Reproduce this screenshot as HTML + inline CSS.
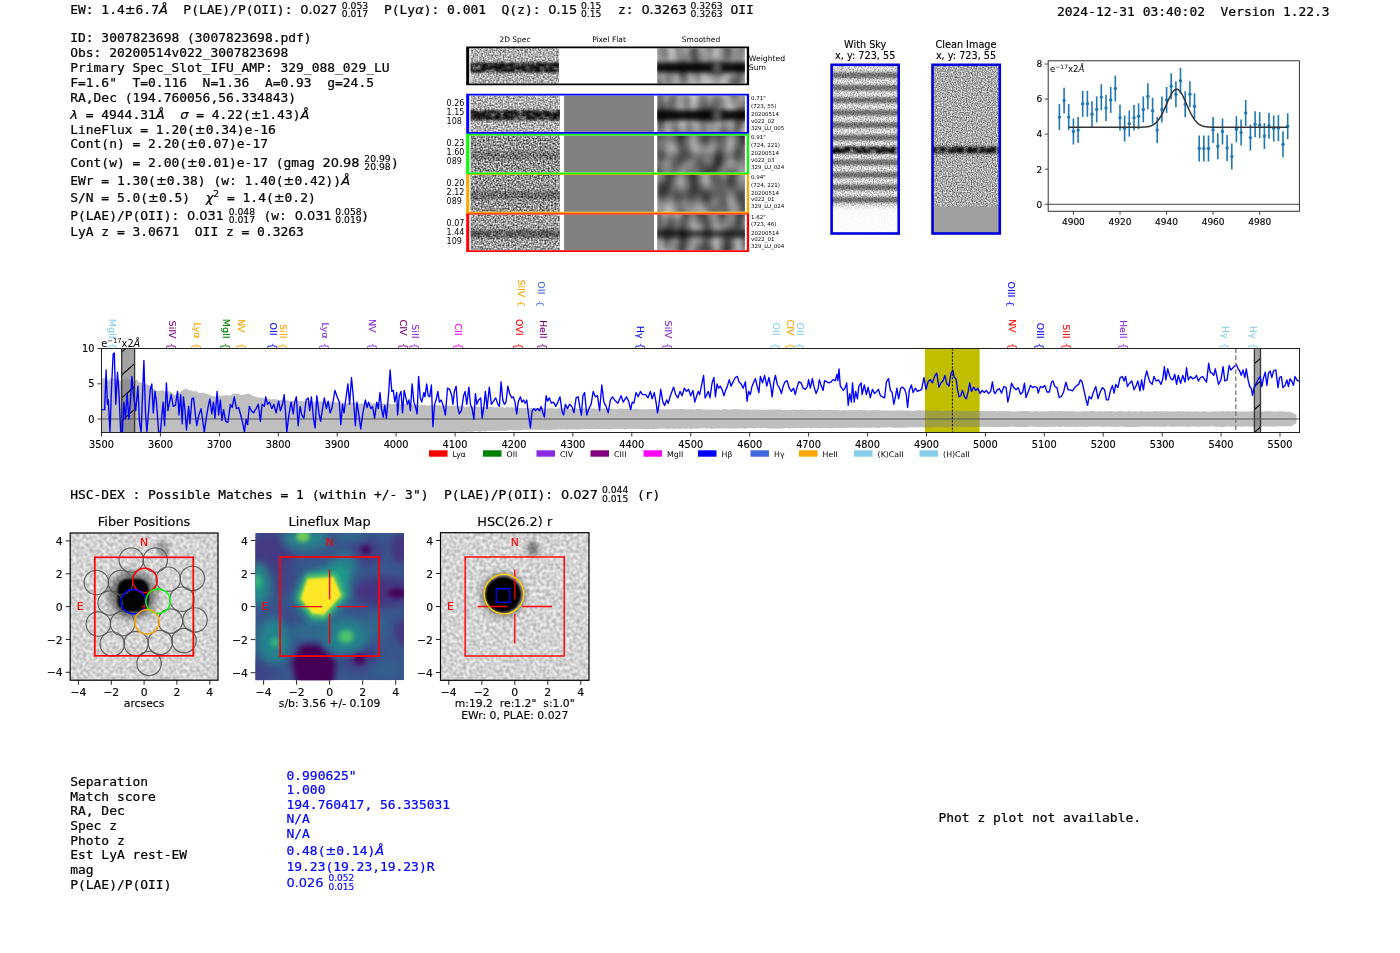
<!DOCTYPE html><html><head><meta charset="utf-8"><title>ELiXer report 3007823698</title><style>
html,body{margin:0;padding:0;background:#fff}body{width:1400px;height:953px;overflow:hidden}
svg{display:block;opacity:0.999}text{white-space:pre}
.m{font-family:'DejaVu Sans Mono','Liberation Mono',monospace}.s{font-family:'DejaVu Sans','Liberation Sans',sans-serif}.i{font-family:'DejaVu Sans','Liberation Sans',sans-serif;font-style:oblique}text.m{stroke-width:0.22px}
text.m{stroke:#000}text.m[fill="#0000ff"]{stroke:#0000ff}
</style></head><body>
<svg width="1400" height="953" viewBox="0 0 1400 953">
<defs>
<filter id="n1" x="0" y="0" width="100%" height="100%" color-interpolation-filters="sRGB"><feTurbulence type="fractalNoise" baseFrequency="0.6" numOctaves="1" seed="3"/><feColorMatrix type="matrix" values="1.25 0 0 0 0.065 1.25 0 0 0 0.065 1.25 0 0 0 0.065 0 0 0 0 1"/></filter>
<filter id="n2" x="0" y="0" width="100%" height="100%" color-interpolation-filters="sRGB"><feTurbulence type="fractalNoise" baseFrequency="0.6" numOctaves="1" seed="11"/><feColorMatrix type="matrix" values="1.25 0 0 0 0.065 1.25 0 0 0 0.065 1.25 0 0 0 0.065 0 0 0 0 1"/></filter>
<filter id="n3" x="0" y="0" width="100%" height="100%" color-interpolation-filters="sRGB"><feTurbulence type="fractalNoise" baseFrequency="0.6" numOctaves="1" seed="23"/><feColorMatrix type="matrix" values="1.5 0 0 0 -0.17 1.5 0 0 0 -0.17 1.5 0 0 0 -0.17 0 0 0 0 1"/></filter>
<filter id="n4" x="0" y="0" width="100%" height="100%" color-interpolation-filters="sRGB"><feTurbulence type="fractalNoise" baseFrequency="0.6" numOctaves="1" seed="31"/><feColorMatrix type="matrix" values="1.5 0 0 0 -0.17 1.5 0 0 0 -0.17 1.5 0 0 0 -0.17 0 0 0 0 1"/></filter>
<filter id="n5" x="0" y="0" width="100%" height="100%" color-interpolation-filters="sRGB"><feTurbulence type="fractalNoise" baseFrequency="0.6" numOctaves="1" seed="47"/><feColorMatrix type="matrix" values="1.4 0 0 0 -0.08 1.4 0 0 0 -0.08 1.4 0 0 0 -0.08 0 0 0 0 1"/></filter>
<filter id="nsm1" x="0" y="0" width="100%" height="100%" color-interpolation-filters="sRGB"><feTurbulence type="fractalNoise" baseFrequency="0.09 0.04" numOctaves="1" seed="9"/><feColorMatrix type="matrix" values="0.9 0 0 0 0.1 0.9 0 0 0 0.1 0.9 0 0 0 0.1 0 0 0 0 1"/></filter>
<filter id="nsm2" x="0" y="0" width="100%" height="100%" color-interpolation-filters="sRGB"><feTurbulence type="fractalNoise" baseFrequency="0.08 0.05" numOctaves="1" seed="19"/><feColorMatrix type="matrix" values="0.9 0 0 0 -0.03 0.9 0 0 0 -0.03 0.9 0 0 0 -0.03 0 0 0 0 1"/></filter>
<filter id="nsm3" x="0" y="0" width="100%" height="100%" color-interpolation-filters="sRGB"><feTurbulence type="fractalNoise" baseFrequency="0.08 0.05" numOctaves="1" seed="29"/><feColorMatrix type="matrix" values="0.9 0 0 0 -0.02 0.9 0 0 0 -0.02 0.9 0 0 0 -0.02 0 0 0 0 1"/></filter>
<filter id="nsm4" x="0" y="0" width="100%" height="100%" color-interpolation-filters="sRGB"><feTurbulence type="fractalNoise" baseFrequency="0.09 0.045" numOctaves="1" seed="39"/><feColorMatrix type="matrix" values="0.85 0 0 0 0.03 0.85 0 0 0 0.03 0.85 0 0 0 0.03 0 0 0 0 1"/></filter>
<filter id="nsky" x="0" y="0" width="100%" height="100%" color-interpolation-filters="sRGB"><feTurbulence type="fractalNoise" baseFrequency="0.75" numOctaves="1" seed="13"/><feColorMatrix type="matrix" values="1.2 0 0 0 0.25 1.2 0 0 0 0.25 1.2 0 0 0 0.25 0 0 0 0 1"/></filter>
<filter id="nclean" x="0" y="0" width="100%" height="100%" color-interpolation-filters="sRGB"><feTurbulence type="fractalNoise" baseFrequency="0.8" numOctaves="1" seed="17"/><feColorMatrix type="matrix" values="1.25 0 0 0 0.045 1.25 0 0 0 0.045 1.25 0 0 0 0.045 0 0 0 0 1"/></filter>
<filter id="nbg" x="0" y="0" width="100%" height="100%" color-interpolation-filters="sRGB"><feTurbulence type="fractalNoise" baseFrequency="0.3" numOctaves="1" seed="21"/><feColorMatrix type="matrix" values="0.45 0 0 0 0.605 0.45 0 0 0 0.605 0.45 0 0 0 0.605 0 0 0 0 1"/></filter>
<filter id="nbg2" x="0" y="0" width="100%" height="100%" color-interpolation-filters="sRGB"><feTurbulence type="fractalNoise" baseFrequency="0.3" numOctaves="1" seed="37"/><feColorMatrix type="matrix" values="0.45 0 0 0 0.605 0.45 0 0 0 0.605 0.45 0 0 0 0.605 0 0 0 0 1"/></filter>
<filter id="blur1" x="-50%" y="-50%" width="200%" height="200%"><feGaussianBlur stdDeviation="1.2"/></filter>
<filter id="blur2" x="-50%" y="-50%" width="200%" height="200%"><feGaussianBlur stdDeviation="2"/></filter>
<filter id="blur3" x="-50%" y="-50%" width="200%" height="200%"><feGaussianBlur stdDeviation="3"/></filter>
<filter id="blur4" x="-50%" y="-50%" width="200%" height="200%"><feGaussianBlur stdDeviation="4"/></filter>
<filter id="blur5" x="-50%" y="-50%" width="200%" height="200%"><feGaussianBlur stdDeviation="5"/></filter>
<filter id="blur7" x="-50%" y="-50%" width="200%" height="200%"><feGaussianBlur stdDeviation="7"/></filter>
<filter id="bandtex" x="-5%" y="-60%" width="110%" height="220%"><feTurbulence type="fractalNoise" baseFrequency="0.22 0.3" numOctaves="1" seed="77"/><feColorMatrix type="matrix" values="0 0 0 0 0 0 0 0 0 0 0 0 0 0 0 2.6 0 0 0 -0.45"/><feComposite in2="SourceGraphic" operator="in"/><feGaussianBlur stdDeviation="1.3"/></filter>
</defs>
<rect width="1400" height="953" fill="#fff"/>
<text class="m" x="70.2" y="14.1" font-size="12.95">EW: 1.4<tspan class="s">±</tspan>6.7<tspan class="i">Å</tspan>  P(LAE)/P(OII): <tspan class="s">0.027</tspan></text>
<text class="s" x="341.80" y="8.90" font-size="9.20" stroke="#000" stroke-width="0.15">0.053</text>
<text class="s" x="341.80" y="17.20" font-size="9.20" stroke="#000" stroke-width="0.15">0.017</text>
<text class="m" x="384" y="14.1" font-size="12.95">P(Ly<tspan class="i">α</tspan>): 0.001  Q(z): <tspan class="s">0.15</tspan></text>
<text class="s" x="581.00" y="8.90" font-size="9.20" stroke="#000" stroke-width="0.15">0.15</text>
<text class="s" x="581.00" y="17.20" font-size="9.20" stroke="#000" stroke-width="0.15">0.15</text>
<text class="m" x="618" y="14.1" font-size="12.95">z: <tspan class="s">0.3263</tspan></text>
<text class="s" x="690.50" y="8.90" font-size="9.20" stroke="#000" stroke-width="0.15">0.3263</text>
<text class="s" x="690.50" y="17.20" font-size="9.20" stroke="#000" stroke-width="0.15">0.3263</text>
<text class="m" x="730.5" y="14.1" font-size="12.95">OII</text>
<text class="m" x="1057.00" y="16.30" font-size="12.95" stroke="#000" stroke-width="0.22" >2024-12-31 03:40:02  Version 1.22.3</text>
<text class="m" x="70.20" y="42.20" font-size="12.95" stroke="#000" stroke-width="0.22" >ID: 3007823698 (3007823698.pdf)</text>
<text class="m" x="70.20" y="57.10" font-size="12.95" stroke="#000" stroke-width="0.22" >Obs: 20200514v022_3007823698</text>
<text class="m" x="70.20" y="71.80" font-size="12.95" stroke="#000" stroke-width="0.22" >Primary Spec_Slot_IFU_AMP: 329_088_029_LU</text>
<text class="m" x="70.20" y="87.20" font-size="12.95" stroke="#000" stroke-width="0.22" >F=1.6"  T=0.116  N=1.36  A=0.93  g=24.5</text>
<text class="m" x="70.20" y="101.50" font-size="12.95" stroke="#000" stroke-width="0.22" >RA,Dec (194.760056,56.334843)</text>
<text class="m" x="70.2" y="119.3" font-size="12.95"><tspan class="i">λ</tspan> = 4944.31<tspan class="i">Å</tspan>  <tspan class="i">σ</tspan> = 4.22(<tspan class="s">±</tspan>1.43)<tspan class="i">Å</tspan></text>
<text class="m" x="70.2" y="134" font-size="12.95">LineFlux = 1.20(<tspan class="s">±</tspan>0.34)e-16</text>
<text class="m" x="70.2" y="148.2" font-size="12.95">Cont(n) = 2.20(<tspan class="s">±</tspan>0.07)e-17</text>
<text class="m" x="70.2" y="167" font-size="12.95">Cont(w) = 2.00(<tspan class="s">±</tspan>0.01)e-17 (gmag <tspan class="s">20.98</tspan></text>
<text class="s" x="364.30" y="161.80" font-size="9.20" stroke="#000" stroke-width="0.15">20.99</text>
<text class="s" x="364.30" y="170.10" font-size="9.20" stroke="#000" stroke-width="0.15">20.98</text>
<text class="m" x="391.00" y="167.00" font-size="12.95" stroke="#000" stroke-width="0.22" >)</text>
<text class="m" x="70.2" y="185" font-size="12.95">EWr = 1.30(<tspan class="s">±</tspan>0.38) (w: 1.40(<tspan class="s">±</tspan>0.42))<tspan class="i">Å</tspan></text>
<text class="m" x="70.2" y="202.1" font-size="12.95">S/N = 5.0(<tspan class="s">±</tspan>0.5)  <tspan class="i">χ</tspan><tspan class="s" font-size="9.2" dy="-5">2</tspan><tspan dy="5"> = 1.4(</tspan><tspan class="s">±</tspan>0.2)</text>
<text class="m" x="70.2" y="220.3" font-size="12.95">P(LAE)/P(OII): <tspan class="s">0.031</tspan></text>
<text class="s" x="228.70" y="215.10" font-size="9.20" stroke="#000" stroke-width="0.15">0.048</text>
<text class="s" x="228.70" y="223.40" font-size="9.20" stroke="#000" stroke-width="0.15">0.017</text>
<text class="m" x="263.5" y="220.3" font-size="12.95">(w: <tspan class="s">0.031</tspan></text>
<text class="s" x="335.30" y="215.10" font-size="9.20" stroke="#000" stroke-width="0.15">0.058</text>
<text class="s" x="335.30" y="223.40" font-size="9.20" stroke="#000" stroke-width="0.15">0.019</text>
<text class="m" x="361.30" y="220.30" font-size="12.95" stroke="#000" stroke-width="0.22" >)</text>
<text class="m" x="70.20" y="236.30" font-size="12.95" stroke="#000" stroke-width="0.22" >LyA z = 3.0671  OII z = 0.3263</text>
<text class="s" x="515.00" y="42.00" font-size="7.50" text-anchor="middle" stroke="#000" stroke-width="0" >2D Spec</text>
<text class="s" x="609.00" y="42.00" font-size="7.50" text-anchor="middle" stroke="#000" stroke-width="0" >Pixel Flat</text>
<text class="s" x="701.00" y="42.00" font-size="7.50" text-anchor="middle" stroke="#000" stroke-width="0" >Smoothed</text>
<clipPath id="c2d0"><rect x="470.6" y="48.2" width="88.4" height="35.2"/></clipPath><g clip-path="url(#c2d0)">
<rect x="470.6" y="48.2" width="90" height="35.2" filter="url(#n1)"/>
<rect x="455" y="62.5" width="120" height="10.0" fill="#000" opacity="0.94" filter="url(#bandtex)"/>
</g>
<clipPath id="csm0"><rect x="657.3" y="48.2" width="87.6" height="35.2"/></clipPath><g clip-path="url(#csm0)">
<rect x="657.3" y="48.2" width="87.6" height="35.2" filter="url(#nsm1)"/>
<rect x="640" y="62.5" width="125" height="10.0" fill="#000" opacity="0.92" filter="url(#blur2)"/>
<ellipse cx="717" cy="67.5" rx="5" ry="6" fill="#8a8a8a" opacity="0.55" filter="url(#blur2)"/>
</g>
<path fill-rule="evenodd" fill="#000" d="M466.2,46.4 H749.1 V85.2 H466.2 Z M469.2,48.2 H746.8 V83.4 H469.2 Z"/>
<clipPath id="c2d4"><rect x="470.6" y="214.4" width="89.3" height="35.9"/></clipPath><g clip-path="url(#c2d4)">
<rect x="470.6" y="214.4" width="90" height="35.9" filter="url(#n5)"/>
<rect x="455" y="229.8" width="120" height="8.0" fill="#000" opacity="0.52" filter="url(#bandtex)"/>
</g>
<rect x="564.1" y="214.4" width="89.9" height="35.9" fill="#808080"/>
<clipPath id="csm4"><rect x="657.3" y="214.4" width="87.6" height="35.9"/></clipPath><g clip-path="url(#csm4)">
<rect x="657.3" y="214.4" width="87.6" height="35.9" filter="url(#nsm4)"/>
<rect x="640" y="229.8" width="125" height="8.0" fill="#000" opacity="0.62" filter="url(#blur2)"/>
</g>
<path fill-rule="evenodd" fill="#ff0000" d="M466.2,212.6 H749.1 V252.1 H466.2 Z M469.2,214.4 H746.8 V250.3 H469.2 Z"/>
<clipPath id="c2d3"><rect x="470.6" y="175.0" width="89.3" height="36.8"/></clipPath><g clip-path="url(#c2d3)">
<rect x="470.6" y="175.0" width="90" height="36.8" filter="url(#n4)"/>
<rect x="455" y="191.0" width="120" height="8.0" fill="#000" opacity="0.34" filter="url(#bandtex)"/>
</g>
<rect x="564.1" y="175.0" width="89.9" height="36.8" fill="#808080"/>
<clipPath id="csm3"><rect x="657.3" y="175.0" width="87.6" height="36.8"/></clipPath><g clip-path="url(#csm3)">
<rect x="657.3" y="175.0" width="87.6" height="36.8" filter="url(#nsm3)"/>
<rect x="640" y="191.0" width="125" height="8.0" fill="#000" opacity="0.12" filter="url(#blur2)"/>
</g>
<path fill-rule="evenodd" fill="#ffa500" d="M466.2,173.2 H749.1 V213.6 H466.2 Z M469.2,175.0 H746.8 V211.8 H469.2 Z"/>
<clipPath id="c2d2"><rect x="470.6" y="135.5" width="89.3" height="36.9"/></clipPath><g clip-path="url(#c2d2)">
<rect x="470.6" y="135.5" width="90" height="36.9" filter="url(#n3)"/>
<rect x="455" y="151.5" width="120" height="8.0" fill="#000" opacity="0.26" filter="url(#bandtex)"/>
</g>
<rect x="564.1" y="135.5" width="89.9" height="36.9" fill="#808080"/>
<clipPath id="csm2"><rect x="657.3" y="135.5" width="87.6" height="36.9"/></clipPath><g clip-path="url(#csm2)">
<rect x="657.3" y="135.5" width="87.6" height="36.9" filter="url(#nsm2)"/>
<rect x="640" y="151.5" width="125" height="8.0" fill="#000" opacity="0.12" filter="url(#blur2)"/>
</g>
<path fill-rule="evenodd" fill="#00ff00" d="M466.2,133.7 H749.1 V174.2 H466.2 Z M469.2,135.5 H746.8 V172.4 H469.2 Z"/>
<clipPath id="c2d1"><rect x="470.6" y="95.6" width="89.3" height="36.3"/></clipPath><g clip-path="url(#c2d1)">
<rect x="470.6" y="95.6" width="90" height="36.3" filter="url(#n2)"/>
<rect x="455" y="110.2" width="120" height="10.0" fill="#000" opacity="0.94" filter="url(#bandtex)"/>
</g>
<rect x="564.1" y="95.6" width="89.9" height="36.3" fill="#808080"/>
<clipPath id="csm1"><rect x="657.3" y="95.6" width="87.6" height="36.3"/></clipPath><g clip-path="url(#csm1)">
<rect x="657.3" y="95.6" width="87.6" height="36.3" filter="url(#nsm1)"/>
<rect x="640" y="110.2" width="125" height="10.0" fill="#000" opacity="0.92" filter="url(#blur2)"/>
<ellipse cx="717" cy="115.2" rx="5" ry="6" fill="#8a8a8a" opacity="0.55" filter="url(#blur2)"/>
</g>
<path fill-rule="evenodd" fill="#0000ff" d="M466.2,93.8 H749.1 V133.7 H466.2 Z M469.2,95.6 H746.8 V131.9 H469.2 Z"/>
<text class="s" x="748.80" y="61.30" font-size="7.70" stroke="#000" stroke-width="0" >Weighted</text>
<text class="s" x="748.80" y="70.40" font-size="7.70" stroke="#000" stroke-width="0" >Sum</text>
<text class="s" x="446.60" y="106.10" font-size="8.00" stroke="#000" stroke-width="0" >0.26</text>
<text class="s" x="446.60" y="114.90" font-size="8.00" stroke="#000" stroke-width="0" >1.15</text>
<text class="s" x="446.60" y="123.70" font-size="8.00" stroke="#000" stroke-width="0" >108</text>
<text class="s" x="751.00" y="100.20" font-size="5.50" stroke="#000" stroke-width="0" >0.71"</text>
<text class="s" x="751.00" y="108.10" font-size="5.50" stroke="#000" stroke-width="0" >(723, 55)</text>
<text class="s" x="751.00" y="116.20" font-size="5.50" stroke="#000" stroke-width="0" >20200514</text>
<text class="s" x="751.00" y="122.70" font-size="5.50" stroke="#000" stroke-width="0" >v022_02</text>
<text class="s" x="751.00" y="129.60" font-size="5.50" stroke="#000" stroke-width="0" >329_LU_005</text>
<text class="s" x="446.60" y="146.20" font-size="8.00" stroke="#000" stroke-width="0" >0.23</text>
<text class="s" x="446.60" y="155.00" font-size="8.00" stroke="#000" stroke-width="0" >1.60</text>
<text class="s" x="446.60" y="163.80" font-size="8.00" stroke="#000" stroke-width="0" >089</text>
<text class="s" x="751.00" y="139.20" font-size="5.50" stroke="#000" stroke-width="0" >0.91"</text>
<text class="s" x="751.00" y="147.10" font-size="5.50" stroke="#000" stroke-width="0" >(724, 221)</text>
<text class="s" x="751.00" y="155.20" font-size="5.50" stroke="#000" stroke-width="0" >20200514</text>
<text class="s" x="751.00" y="161.70" font-size="5.50" stroke="#000" stroke-width="0" >v022_03</text>
<text class="s" x="751.00" y="168.60" font-size="5.50" stroke="#000" stroke-width="0" >329_LU_024</text>
<text class="s" x="446.60" y="186.00" font-size="8.00" stroke="#000" stroke-width="0" >0.20</text>
<text class="s" x="446.60" y="194.80" font-size="8.00" stroke="#000" stroke-width="0" >2.12</text>
<text class="s" x="446.60" y="203.60" font-size="8.00" stroke="#000" stroke-width="0" >089</text>
<text class="s" x="751.00" y="178.90" font-size="5.50" stroke="#000" stroke-width="0" >0.94"</text>
<text class="s" x="751.00" y="186.80" font-size="5.50" stroke="#000" stroke-width="0" >(724, 221)</text>
<text class="s" x="751.00" y="194.90" font-size="5.50" stroke="#000" stroke-width="0" >20200514</text>
<text class="s" x="751.00" y="201.40" font-size="5.50" stroke="#000" stroke-width="0" >v022_01</text>
<text class="s" x="751.00" y="208.30" font-size="5.50" stroke="#000" stroke-width="0" >329_LU_024</text>
<text class="s" x="446.60" y="226.00" font-size="8.00" stroke="#000" stroke-width="0" >0.07</text>
<text class="s" x="446.60" y="234.80" font-size="8.00" stroke="#000" stroke-width="0" >1.44</text>
<text class="s" x="446.60" y="243.60" font-size="8.00" stroke="#000" stroke-width="0" >109</text>
<text class="s" x="751.00" y="218.50" font-size="5.50" stroke="#000" stroke-width="0" >1.62"</text>
<text class="s" x="751.00" y="226.40" font-size="5.50" stroke="#000" stroke-width="0" >(723, 46)</text>
<text class="s" x="751.00" y="234.50" font-size="5.50" stroke="#000" stroke-width="0" >20200514</text>
<text class="s" x="751.00" y="241.00" font-size="5.50" stroke="#000" stroke-width="0" >v022_01</text>
<text class="s" x="751.00" y="247.90" font-size="5.50" stroke="#000" stroke-width="0" >329_LU_004</text>
<text class="s" x="865.20" y="47.50" font-size="9.70" text-anchor="middle" stroke="#000" stroke-width="0.14" >With Sky</text>
<text class="s" x="865.20" y="58.50" font-size="9.70" text-anchor="middle" stroke="#000" stroke-width="0.14" >x, y: 723, 55</text>
<text class="s" x="966.00" y="47.50" font-size="9.70" text-anchor="middle" stroke="#000" stroke-width="0.14" >Clean Image</text>
<text class="s" x="966.00" y="58.50" font-size="9.70" text-anchor="middle" stroke="#000" stroke-width="0.14" >x, y: 723, 55</text>
<clipPath id="csky"><rect x="832.0" y="65.0" width="67.0" height="169.0"/></clipPath><g clip-path="url(#csky)">
<rect x="832" y="65" width="67" height="169" filter="url(#nsky)"/>
<rect x="820" y="72.3" width="90" height="6" fill="#000" opacity="0.48" filter="url(#blur1)"/>
<rect x="820" y="84.8" width="90" height="6" fill="#000" opacity="0.48" filter="url(#blur1)"/>
<rect x="820" y="97.2" width="90" height="6" fill="#000" opacity="0.48" filter="url(#blur1)"/>
<rect x="820" y="109.7" width="90" height="6" fill="#000" opacity="0.48" filter="url(#blur1)"/>
<rect x="820" y="122.1" width="90" height="6" fill="#000" opacity="0.48" filter="url(#blur1)"/>
<rect x="820" y="134.6" width="90" height="6" fill="#000" opacity="0.48" filter="url(#blur1)"/>
<rect x="820" y="159.4" width="90" height="6" fill="#000" opacity="0.48" filter="url(#blur1)"/>
<rect x="820" y="171.9" width="90" height="6" fill="#000" opacity="0.48" filter="url(#blur1)"/>
<rect x="820" y="184.3" width="90" height="6" fill="#000" opacity="0.48" filter="url(#blur1)"/>
<rect x="820" y="196.8" width="90" height="6" fill="#000" opacity="0.48" filter="url(#blur1)"/>
<rect x="815" y="146.3" width="100" height="7.4" fill="#000" opacity="1" filter="url(#bandtex)"/>
<rect x="820" y="207" width="90" height="40" fill="#fff" opacity="0.9" filter="url(#blur2)"/>
</g>
<rect x="831.6" y="64.8" width="67.1" height="168.7" fill="none" stroke="#0000dd" stroke-width="2.6"/>
<clipPath id="ccl"><rect x="933.0" y="65.0" width="67.0" height="169.0"/></clipPath><g clip-path="url(#ccl)">
<rect x="933" y="65" width="67" height="142" filter="url(#nclean)"/>
<rect x="915" y="146.6" width="100" height="6.8" fill="#000" opacity="0.95" filter="url(#bandtex)"/>
<rect x="933" y="206.5" width="67" height="28" fill="#a0a0a0"/>
</g>
<rect x="932.5" y="64.8" width="67.3" height="168.7" fill="none" stroke="#0000dd" stroke-width="2.6"/>
<line x1="1048.2" x2="1299.4" y1="204.3" y2="204.3" stroke="#444" stroke-width="1"/>
<line x1="1059.4" x2="1059.4" y1="104.1" y2="130.1" stroke="#1f77b4" stroke-width="1.6"/>
<circle cx="1059.4" cy="117.1" r="1.7" fill="#1f77b4"/>
<line x1="1064.1" x2="1064.1" y1="87.7" y2="113.6" stroke="#1f77b4" stroke-width="1.6"/>
<circle cx="1064.1" cy="100.6" r="1.7" fill="#1f77b4"/>
<line x1="1068.7" x2="1068.7" y1="104.1" y2="130.1" stroke="#1f77b4" stroke-width="1.6"/>
<circle cx="1068.7" cy="117.1" r="1.7" fill="#1f77b4"/>
<line x1="1073.4" x2="1073.4" y1="118.5" y2="144.5" stroke="#1f77b4" stroke-width="1.6"/>
<circle cx="1073.4" cy="131.5" r="1.7" fill="#1f77b4"/>
<line x1="1078.1" x2="1078.1" y1="117.1" y2="143.1" stroke="#1f77b4" stroke-width="1.6"/>
<circle cx="1078.1" cy="130.1" r="1.7" fill="#1f77b4"/>
<line x1="1082.7" x2="1082.7" y1="90.8" y2="116.8" stroke="#1f77b4" stroke-width="1.6"/>
<circle cx="1082.7" cy="103.8" r="1.7" fill="#1f77b4"/>
<line x1="1087.4" x2="1087.4" y1="90.8" y2="116.8" stroke="#1f77b4" stroke-width="1.6"/>
<circle cx="1087.4" cy="103.8" r="1.7" fill="#1f77b4"/>
<line x1="1092.0" x2="1092.0" y1="101.3" y2="127.3" stroke="#1f77b4" stroke-width="1.6"/>
<circle cx="1092.0" cy="114.3" r="1.7" fill="#1f77b4"/>
<line x1="1096.7" x2="1096.7" y1="96.4" y2="122.4" stroke="#1f77b4" stroke-width="1.6"/>
<circle cx="1096.7" cy="109.4" r="1.7" fill="#1f77b4"/>
<line x1="1101.3" x2="1101.3" y1="84.2" y2="110.1" stroke="#1f77b4" stroke-width="1.6"/>
<circle cx="1101.3" cy="97.1" r="1.7" fill="#1f77b4"/>
<line x1="1106.0" x2="1106.0" y1="95.0" y2="121.0" stroke="#1f77b4" stroke-width="1.6"/>
<circle cx="1106.0" cy="108.0" r="1.7" fill="#1f77b4"/>
<line x1="1110.7" x2="1110.7" y1="87.0" y2="112.9" stroke="#1f77b4" stroke-width="1.6"/>
<circle cx="1110.7" cy="99.9" r="1.7" fill="#1f77b4"/>
<line x1="1115.3" x2="1115.3" y1="75.6" y2="101.5" stroke="#1f77b4" stroke-width="1.6"/>
<circle cx="1115.3" cy="88.5" r="1.7" fill="#1f77b4"/>
<line x1="1120.0" x2="1120.0" y1="104.7" y2="130.6" stroke="#1f77b4" stroke-width="1.6"/>
<circle cx="1120.0" cy="117.7" r="1.7" fill="#1f77b4"/>
<line x1="1124.6" x2="1124.6" y1="115.5" y2="141.5" stroke="#1f77b4" stroke-width="1.6"/>
<circle cx="1124.6" cy="128.5" r="1.7" fill="#1f77b4"/>
<line x1="1129.3" x2="1129.3" y1="110.6" y2="136.6" stroke="#1f77b4" stroke-width="1.6"/>
<circle cx="1129.3" cy="123.6" r="1.7" fill="#1f77b4"/>
<line x1="1134.0" x2="1134.0" y1="104.7" y2="130.6" stroke="#1f77b4" stroke-width="1.6"/>
<circle cx="1134.0" cy="117.7" r="1.7" fill="#1f77b4"/>
<line x1="1138.6" x2="1138.6" y1="103.3" y2="129.2" stroke="#1f77b4" stroke-width="1.6"/>
<circle cx="1138.6" cy="116.2" r="1.7" fill="#1f77b4"/>
<line x1="1143.3" x2="1143.3" y1="96.4" y2="122.4" stroke="#1f77b4" stroke-width="1.6"/>
<circle cx="1143.3" cy="109.4" r="1.7" fill="#1f77b4"/>
<line x1="1147.9" x2="1147.9" y1="83.3" y2="109.2" stroke="#1f77b4" stroke-width="1.6"/>
<circle cx="1147.9" cy="96.3" r="1.7" fill="#1f77b4"/>
<line x1="1152.6" x2="1152.6" y1="97.8" y2="123.8" stroke="#1f77b4" stroke-width="1.6"/>
<circle cx="1152.6" cy="110.8" r="1.7" fill="#1f77b4"/>
<line x1="1157.2" x2="1157.2" y1="117.1" y2="143.1" stroke="#1f77b4" stroke-width="1.6"/>
<circle cx="1157.2" cy="130.1" r="1.7" fill="#1f77b4"/>
<line x1="1161.9" x2="1161.9" y1="96.4" y2="122.4" stroke="#1f77b4" stroke-width="1.6"/>
<circle cx="1161.9" cy="109.4" r="1.7" fill="#1f77b4"/>
<line x1="1166.6" x2="1166.6" y1="87.0" y2="112.9" stroke="#1f77b4" stroke-width="1.6"/>
<circle cx="1166.6" cy="99.9" r="1.7" fill="#1f77b4"/>
<line x1="1171.2" x2="1171.2" y1="73.3" y2="99.2" stroke="#1f77b4" stroke-width="1.6"/>
<circle cx="1171.2" cy="86.3" r="1.7" fill="#1f77b4"/>
<line x1="1175.9" x2="1175.9" y1="81.3" y2="107.3" stroke="#1f77b4" stroke-width="1.6"/>
<circle cx="1175.9" cy="94.3" r="1.7" fill="#1f77b4"/>
<line x1="1180.5" x2="1180.5" y1="67.8" y2="93.8" stroke="#1f77b4" stroke-width="1.6"/>
<circle cx="1180.5" cy="80.8" r="1.7" fill="#1f77b4"/>
<line x1="1185.2" x2="1185.2" y1="91.3" y2="117.3" stroke="#1f77b4" stroke-width="1.6"/>
<circle cx="1185.2" cy="104.3" r="1.7" fill="#1f77b4"/>
<line x1="1189.9" x2="1189.9" y1="81.3" y2="107.3" stroke="#1f77b4" stroke-width="1.6"/>
<circle cx="1189.9" cy="94.3" r="1.7" fill="#1f77b4"/>
<line x1="1194.5" x2="1194.5" y1="93.3" y2="119.2" stroke="#1f77b4" stroke-width="1.6"/>
<circle cx="1194.5" cy="106.3" r="1.7" fill="#1f77b4"/>
<line x1="1199.2" x2="1199.2" y1="135.5" y2="161.5" stroke="#1f77b4" stroke-width="1.6"/>
<circle cx="1199.2" cy="148.5" r="1.7" fill="#1f77b4"/>
<line x1="1203.8" x2="1203.8" y1="135.5" y2="161.5" stroke="#1f77b4" stroke-width="1.6"/>
<circle cx="1203.8" cy="148.5" r="1.7" fill="#1f77b4"/>
<line x1="1208.5" x2="1208.5" y1="135.5" y2="161.5" stroke="#1f77b4" stroke-width="1.6"/>
<circle cx="1208.5" cy="148.5" r="1.7" fill="#1f77b4"/>
<line x1="1213.1" x2="1213.1" y1="117.0" y2="142.9" stroke="#1f77b4" stroke-width="1.6"/>
<circle cx="1213.1" cy="129.9" r="1.7" fill="#1f77b4"/>
<line x1="1217.8" x2="1217.8" y1="133.3" y2="159.2" stroke="#1f77b4" stroke-width="1.6"/>
<circle cx="1217.8" cy="146.2" r="1.7" fill="#1f77b4"/>
<line x1="1222.5" x2="1222.5" y1="118.5" y2="144.5" stroke="#1f77b4" stroke-width="1.6"/>
<circle cx="1222.5" cy="131.5" r="1.7" fill="#1f77b4"/>
<line x1="1227.1" x2="1227.1" y1="135.0" y2="161.0" stroke="#1f77b4" stroke-width="1.6"/>
<circle cx="1227.1" cy="148.0" r="1.7" fill="#1f77b4"/>
<line x1="1231.8" x2="1231.8" y1="143.6" y2="169.6" stroke="#1f77b4" stroke-width="1.6"/>
<circle cx="1231.8" cy="156.6" r="1.7" fill="#1f77b4"/>
<line x1="1236.4" x2="1236.4" y1="116.2" y2="142.2" stroke="#1f77b4" stroke-width="1.6"/>
<circle cx="1236.4" cy="129.2" r="1.7" fill="#1f77b4"/>
<line x1="1241.1" x2="1241.1" y1="119.6" y2="145.5" stroke="#1f77b4" stroke-width="1.6"/>
<circle cx="1241.1" cy="132.6" r="1.7" fill="#1f77b4"/>
<line x1="1245.7" x2="1245.7" y1="99.9" y2="125.9" stroke="#1f77b4" stroke-width="1.6"/>
<circle cx="1245.7" cy="112.9" r="1.7" fill="#1f77b4"/>
<line x1="1250.4" x2="1250.4" y1="124.7" y2="150.6" stroke="#1f77b4" stroke-width="1.6"/>
<circle cx="1250.4" cy="137.6" r="1.7" fill="#1f77b4"/>
<line x1="1255.1" x2="1255.1" y1="111.3" y2="137.3" stroke="#1f77b4" stroke-width="1.6"/>
<circle cx="1255.1" cy="124.3" r="1.7" fill="#1f77b4"/>
<line x1="1259.7" x2="1259.7" y1="112.2" y2="138.2" stroke="#1f77b4" stroke-width="1.6"/>
<circle cx="1259.7" cy="125.2" r="1.7" fill="#1f77b4"/>
<line x1="1264.4" x2="1264.4" y1="123.1" y2="149.0" stroke="#1f77b4" stroke-width="1.6"/>
<circle cx="1264.4" cy="136.1" r="1.7" fill="#1f77b4"/>
<line x1="1269.0" x2="1269.0" y1="112.7" y2="138.7" stroke="#1f77b4" stroke-width="1.6"/>
<circle cx="1269.0" cy="125.7" r="1.7" fill="#1f77b4"/>
<line x1="1273.7" x2="1273.7" y1="115.5" y2="141.5" stroke="#1f77b4" stroke-width="1.6"/>
<circle cx="1273.7" cy="128.5" r="1.7" fill="#1f77b4"/>
<line x1="1278.4" x2="1278.4" y1="115.0" y2="141.0" stroke="#1f77b4" stroke-width="1.6"/>
<circle cx="1278.4" cy="128.0" r="1.7" fill="#1f77b4"/>
<line x1="1283.0" x2="1283.0" y1="131.3" y2="157.3" stroke="#1f77b4" stroke-width="1.6"/>
<circle cx="1283.0" cy="144.3" r="1.7" fill="#1f77b4"/>
<line x1="1287.7" x2="1287.7" y1="113.3" y2="139.2" stroke="#1f77b4" stroke-width="1.6"/>
<circle cx="1287.7" cy="126.2" r="1.7" fill="#1f77b4"/>
<polyline points="1068.7,127.3 1069.9,127.3 1071.1,127.3 1072.2,127.3 1073.4,127.3 1074.6,127.3 1075.7,127.3 1076.9,127.3 1078.1,127.3 1079.2,127.3 1080.4,127.3 1081.6,127.3 1082.7,127.3 1083.9,127.3 1085.0,127.3 1086.2,127.3 1087.4,127.3 1088.5,127.3 1089.7,127.3 1090.9,127.3 1092.0,127.3 1093.2,127.3 1094.4,127.3 1095.5,127.3 1096.7,127.3 1097.9,127.3 1099.0,127.3 1100.2,127.3 1101.3,127.3 1102.5,127.3 1103.7,127.3 1104.8,127.3 1106.0,127.3 1107.2,127.3 1108.3,127.3 1109.5,127.3 1110.7,127.3 1111.8,127.3 1113.0,127.3 1114.2,127.3 1115.3,127.3 1116.5,127.3 1117.7,127.3 1118.8,127.3 1120.0,127.3 1121.1,127.3 1122.3,127.3 1123.5,127.3 1124.6,127.3 1125.8,127.3 1127.0,127.3 1128.1,127.3 1129.3,127.3 1130.5,127.3 1131.6,127.3 1132.8,127.3 1134.0,127.3 1135.1,127.3 1136.3,127.3 1137.4,127.3 1138.6,127.3 1139.8,127.3 1140.9,127.2 1142.1,127.2 1143.3,127.1 1144.4,127.1 1145.6,127.0 1146.8,126.8 1147.9,126.7 1149.1,126.4 1150.3,126.1 1151.4,125.7 1152.6,125.1 1153.8,124.5 1154.9,123.6 1156.1,122.6 1157.2,121.4 1158.4,120.0 1159.6,118.3 1160.7,116.4 1161.9,114.3 1163.1,112.0 1164.2,109.5 1165.4,106.9 1166.6,104.2 1167.7,101.5 1168.9,98.9 1170.1,96.5 1171.2,94.3 1172.4,92.4 1173.5,90.9 1174.7,89.9 1175.9,89.3 1177.0,89.3 1178.2,89.7 1179.4,90.7 1180.5,92.1 1181.7,93.9 1182.9,96.0 1184.0,98.4 1185.2,101.0 1186.4,103.7 1187.5,106.4 1188.7,109.0 1189.9,111.5 1191.0,113.8 1192.2,116.0 1193.3,117.9 1194.5,119.6 1195.7,121.1 1196.8,122.4 1198.0,123.4 1199.2,124.3 1200.3,125.0 1201.5,125.6 1202.7,126.0 1203.8,126.4 1205.0,126.6 1206.2,126.8 1207.3,127.0 1208.5,127.1 1209.6,127.1 1210.8,127.2 1212.0,127.2 1213.1,127.3 1214.3,127.3 1215.5,127.3 1216.6,127.3 1217.8,127.3 1219.0,127.3 1220.1,127.3 1221.3,127.3 1222.5,127.3 1223.6,127.3 1224.8,127.3 1225.9,127.3 1227.1,127.3 1228.3,127.3 1229.4,127.3 1230.6,127.3 1231.8,127.3 1232.9,127.3 1234.1,127.3 1235.3,127.3 1236.4,127.3 1237.6,127.3 1238.8,127.3 1239.9,127.3 1241.1,127.3 1242.3,127.3 1243.4,127.3 1244.6,127.3 1245.7,127.3 1246.9,127.3 1248.1,127.3 1249.2,127.3 1250.4,127.3 1251.6,127.3 1252.7,127.3 1253.9,127.3 1255.1,127.3 1256.2,127.3 1257.4,127.3 1258.6,127.3 1259.7,127.3 1260.9,127.3 1262.0,127.3 1263.2,127.3 1264.4,127.3 1265.5,127.3 1266.7,127.3 1267.9,127.3 1269.0,127.3 1270.2,127.3 1271.4,127.3 1272.5,127.3 1273.7,127.3 1274.9,127.3 1276.0,127.3 1277.2,127.3 1278.4,127.3 1279.5,127.3 1280.7,127.3 1281.8,127.3 1283.0,127.3 1284.2,127.3 1285.3,127.3 1286.5,127.3 1287.7,127.3" fill="none" stroke="#333" stroke-width="1.5"/>
<rect x="1048.2" y="60.8" width="251.2" height="150.5" fill="none" stroke="#333" stroke-width="1"/>
<line x1="1044.7" x2="1048.2" y1="204.3" y2="204.3" stroke="#222" stroke-width="0.8"/>
<text class="s" x="1042.20" y="207.60" font-size="9.00" text-anchor="end" stroke="#000" stroke-width="0.14" >0</text>
<line x1="1044.7" x2="1048.2" y1="169.2" y2="169.2" stroke="#222" stroke-width="0.8"/>
<text class="s" x="1042.20" y="172.52" font-size="9.00" text-anchor="end" stroke="#000" stroke-width="0.14" >2</text>
<line x1="1044.7" x2="1048.2" y1="134.1" y2="134.1" stroke="#222" stroke-width="0.8"/>
<text class="s" x="1042.20" y="137.44" font-size="9.00" text-anchor="end" stroke="#000" stroke-width="0.14" >4</text>
<line x1="1044.7" x2="1048.2" y1="99.1" y2="99.1" stroke="#222" stroke-width="0.8"/>
<text class="s" x="1042.20" y="102.36" font-size="9.00" text-anchor="end" stroke="#000" stroke-width="0.14" >6</text>
<line x1="1044.7" x2="1048.2" y1="64.0" y2="64.0" stroke="#222" stroke-width="0.8"/>
<text class="s" x="1042.20" y="67.28" font-size="9.00" text-anchor="end" stroke="#000" stroke-width="0.14" >8</text>
<line x1="1073.4" x2="1073.4" y1="211.3" y2="214.8" stroke="#222" stroke-width="0.8"/>
<text class="s" x="1073.40" y="224.50" font-size="9.00" text-anchor="middle" stroke="#000" stroke-width="0.14" >4900</text>
<line x1="1120.0" x2="1120.0" y1="211.3" y2="214.8" stroke="#222" stroke-width="0.8"/>
<text class="s" x="1119.98" y="224.50" font-size="9.00" text-anchor="middle" stroke="#000" stroke-width="0.14" >4920</text>
<line x1="1166.6" x2="1166.6" y1="211.3" y2="214.8" stroke="#222" stroke-width="0.8"/>
<text class="s" x="1166.56" y="224.50" font-size="9.00" text-anchor="middle" stroke="#000" stroke-width="0.14" >4940</text>
<line x1="1213.1" x2="1213.1" y1="211.3" y2="214.8" stroke="#222" stroke-width="0.8"/>
<text class="s" x="1213.14" y="224.50" font-size="9.00" text-anchor="middle" stroke="#000" stroke-width="0.14" >4960</text>
<line x1="1259.7" x2="1259.7" y1="211.3" y2="214.8" stroke="#222" stroke-width="0.8"/>
<text class="s" x="1259.72" y="224.50" font-size="9.00" text-anchor="middle" stroke="#000" stroke-width="0.14" >4980</text>
<text class="s" x="1050" y="72.3" font-size="8.6">e<tspan font-size="6" dy="-3.2">−17</tspan><tspan dy="3.2">x2</tspan><tspan class="i">Å</tspan></text>
<text class="s" font-size="9.5" fill="#87ceeb" stroke="#87ceeb" stroke-width="0.12" text-anchor="end" transform="translate(109.1,341.6) rotate(90)" x="0" y="0">MgII </text>
<text class="s" font-size="9.6" fill="#87ceeb" fill-opacity="0.8" transform="translate(108.6,342.3) rotate(90) scale(1.25,1)" x="0" y="0">{</text>
<text class="s" font-size="9.5" fill="#800080" stroke="#800080" stroke-width="0.12" text-anchor="end" transform="translate(168.9,341.6) rotate(90)" x="0" y="0">SiIV </text>
<text class="s" font-size="9.6" fill="#800080" fill-opacity="0.8" transform="translate(168.4,342.3) rotate(90) scale(1.25,1)" x="0" y="0">{</text>
<text class="s" font-size="9.5" fill="#ffa500" stroke="#ffa500" stroke-width="0.12" text-anchor="end" transform="translate(193.6,341.6) rotate(90)" x="0" y="0">Lyα </text>
<text class="s" font-size="9.6" fill="#ffa500" fill-opacity="0.8" transform="translate(193.1,342.3) rotate(90) scale(1.25,1)" x="0" y="0">{</text>
<text class="s" font-size="9.5" fill="#008000" stroke="#008000" stroke-width="0.12" text-anchor="end" transform="translate(222.6,341.6) rotate(90)" x="0" y="0">MgII </text>
<text class="s" font-size="9.6" fill="#008000" fill-opacity="0.8" transform="translate(222.1,342.3) rotate(90) scale(1.25,1)" x="0" y="0">{</text>
<text class="s" font-size="9.5" fill="#ffa500" stroke="#ffa500" stroke-width="0.12" text-anchor="end" transform="translate(238.4,341.6) rotate(90)" x="0" y="0">NV   </text>
<text class="s" font-size="9.6" fill="#ffa500" fill-opacity="0.8" transform="translate(237.9,342.3) rotate(90) scale(1.25,1)" x="0" y="0">{</text>
<text class="s" font-size="9.5" fill="#0000ff" stroke="#0000ff" stroke-width="0.12" text-anchor="end" transform="translate(269.6,341.6) rotate(90)" x="0" y="0">OII  </text>
<text class="s" font-size="9.6" fill="#0000ff" fill-opacity="0.8" transform="translate(269.1,342.3) rotate(90) scale(1.25,1)" x="0" y="0">{</text>
<text class="s" font-size="9.5" fill="#ffa500" stroke="#ffa500" stroke-width="0.12" text-anchor="end" transform="translate(279.6,341.6) rotate(90)" x="0" y="0">SiII </text>
<text class="s" font-size="9.6" fill="#ffa500" fill-opacity="0.8" transform="translate(279.1,342.3) rotate(90) scale(1.25,1)" x="0" y="0">{</text>
<text class="s" font-size="9.5" fill="#8a2be2" stroke="#8a2be2" stroke-width="0.12" text-anchor="end" transform="translate(321.6,341.6) rotate(90)" x="0" y="0">Lyα </text>
<text class="s" font-size="9.6" fill="#8a2be2" fill-opacity="0.8" transform="translate(321.1,342.3) rotate(90) scale(1.25,1)" x="0" y="0">{</text>
<text class="s" font-size="9.5" fill="#8a2be2" stroke="#8a2be2" stroke-width="0.12" text-anchor="end" transform="translate(369.1,341.6) rotate(90)" x="0" y="0">NV   </text>
<text class="s" font-size="9.6" fill="#8a2be2" fill-opacity="0.8" transform="translate(368.6,342.3) rotate(90) scale(1.25,1)" x="0" y="0">{</text>
<text class="s" font-size="9.5" fill="#800080" stroke="#800080" stroke-width="0.12" text-anchor="end" transform="translate(400.4,341.6) rotate(90)" x="0" y="0">CIV  </text>
<text class="s" font-size="9.6" fill="#800080" fill-opacity="0.8" transform="translate(399.9,342.3) rotate(90) scale(1.25,1)" x="0" y="0">{</text>
<text class="s" font-size="9.5" fill="#8a2be2" stroke="#8a2be2" stroke-width="0.12" text-anchor="end" transform="translate(411.6,341.6) rotate(90)" x="0" y="0">SiII </text>
<text class="s" font-size="9.6" fill="#8a2be2" fill-opacity="0.8" transform="translate(411.1,342.3) rotate(90) scale(1.25,1)" x="0" y="0">{</text>
<text class="s" font-size="9.5" fill="#ff00ff" stroke="#ff00ff" stroke-width="0.12" text-anchor="end" transform="translate(455.0,341.6) rotate(90)" x="0" y="0">CII  </text>
<text class="s" font-size="9.6" fill="#ff00ff" fill-opacity="0.8" transform="translate(454.5,342.3) rotate(90) scale(1.25,1)" x="0" y="0">{</text>
<text class="s" font-size="9.5" fill="#ff0000" stroke="#ff0000" stroke-width="0.12" text-anchor="end" transform="translate(515.8,341.6) rotate(90)" x="0" y="0">OVI  </text>
<text class="s" font-size="9.6" fill="#ff0000" fill-opacity="0.8" transform="translate(515.3,342.3) rotate(90) scale(1.25,1)" x="0" y="0">{</text>
<text class="s" font-size="9.5" fill="#ffa500" stroke="#ffa500" stroke-width="0.12" text-anchor="end" transform="translate(518.1,300.4) rotate(90)" x="0" y="0">SiIV </text>
<text class="s" font-size="9.6" fill="#ffa500" fill-opacity="0.8" transform="translate(517.6,299.2) rotate(90) scale(1.45,1)" x="0" y="0">{</text>
<text class="s" font-size="9.5" fill="#800080" stroke="#800080" stroke-width="0.12" text-anchor="end" transform="translate(539.6,341.6) rotate(90)" x="0" y="0">HeII </text>
<text class="s" font-size="9.6" fill="#800080" fill-opacity="0.8" transform="translate(539.1,342.3) rotate(90) scale(1.25,1)" x="0" y="0">{</text>
<text class="s" font-size="9.5" fill="#4169e1" stroke="#4169e1" stroke-width="0.12" text-anchor="end" transform="translate(537.8,300.4) rotate(90)" x="0" y="0">OII  </text>
<text class="s" font-size="9.6" fill="#4169e1" fill-opacity="0.8" transform="translate(537.3,299.2) rotate(90) scale(1.45,1)" x="0" y="0">{</text>
<text class="s" font-size="9.5" fill="#0000ff" stroke="#0000ff" stroke-width="0.12" text-anchor="end" transform="translate(637.1,341.6) rotate(90)" x="0" y="0">Hγ </text>
<text class="s" font-size="9.6" fill="#0000ff" fill-opacity="0.8" transform="translate(636.6,342.3) rotate(90) scale(1.25,1)" x="0" y="0">{</text>
<text class="s" font-size="9.5" fill="#8a2be2" stroke="#8a2be2" stroke-width="0.12" text-anchor="end" transform="translate(664.6,341.6) rotate(90)" x="0" y="0">SiIV </text>
<text class="s" font-size="9.6" fill="#8a2be2" fill-opacity="0.8" transform="translate(664.1,342.3) rotate(90) scale(1.25,1)" x="0" y="0">{</text>
<text class="s" font-size="9.5" fill="#87ceeb" stroke="#87ceeb" stroke-width="0.12" text-anchor="end" transform="translate(772.6,341.6) rotate(90)" x="0" y="0">OII  </text>
<text class="s" font-size="9.6" fill="#87ceeb" fill-opacity="0.8" transform="translate(772.1,342.3) rotate(90) scale(1.25,1)" x="0" y="0">{</text>
<text class="s" font-size="9.5" fill="#ffa500" stroke="#ffa500" stroke-width="0.12" text-anchor="end" transform="translate(787.1,341.6) rotate(90)" x="0" y="0">CIV  </text>
<text class="s" font-size="9.6" fill="#ffa500" fill-opacity="0.8" transform="translate(786.6,342.3) rotate(90) scale(1.25,1)" x="0" y="0">{</text>
<text class="s" font-size="9.5" fill="#87ceeb" stroke="#87ceeb" stroke-width="0.12" text-anchor="end" transform="translate(796.6,341.6) rotate(90)" x="0" y="0">OII  </text>
<text class="s" font-size="9.6" fill="#87ceeb" fill-opacity="0.8" transform="translate(796.1,342.3) rotate(90) scale(1.25,1)" x="0" y="0">{</text>
<text class="s" font-size="9.5" fill="#0000ff" stroke="#0000ff" stroke-width="0.12" text-anchor="end" transform="translate(1007.6,300.4) rotate(90)" x="0" y="0">OIII </text>
<text class="s" font-size="9.6" fill="#0000ff" fill-opacity="0.8" transform="translate(1007.1,299.2) rotate(90) scale(1.45,1)" x="0" y="0">{</text>
<text class="s" font-size="9.5" fill="#ff0000" stroke="#ff0000" stroke-width="0.12" text-anchor="end" transform="translate(1009.1,341.6) rotate(90)" x="0" y="0">NV   </text>
<text class="s" font-size="9.6" fill="#ff0000" fill-opacity="0.8" transform="translate(1008.6,342.3) rotate(90) scale(1.25,1)" x="0" y="0">{</text>
<text class="s" font-size="9.5" fill="#0000ff" stroke="#0000ff" stroke-width="0.12" text-anchor="end" transform="translate(1036.6,341.6) rotate(90)" x="0" y="0">OIII </text>
<text class="s" font-size="9.6" fill="#0000ff" fill-opacity="0.8" transform="translate(1036.1,342.3) rotate(90) scale(1.25,1)" x="0" y="0">{</text>
<text class="s" font-size="9.5" fill="#ff0000" stroke="#ff0000" stroke-width="0.12" text-anchor="end" transform="translate(1063.1,341.6) rotate(90)" x="0" y="0">SiII </text>
<text class="s" font-size="9.6" fill="#ff0000" fill-opacity="0.8" transform="translate(1062.6,342.3) rotate(90) scale(1.25,1)" x="0" y="0">{</text>
<text class="s" font-size="9.5" fill="#8a2be2" stroke="#8a2be2" stroke-width="0.12" text-anchor="end" transform="translate(1120.1,341.6) rotate(90)" x="0" y="0">HeII </text>
<text class="s" font-size="9.6" fill="#8a2be2" fill-opacity="0.8" transform="translate(1119.6,342.3) rotate(90) scale(1.25,1)" x="0" y="0">{</text>
<text class="s" font-size="9.5" fill="#87ceeb" stroke="#87ceeb" stroke-width="0.12" text-anchor="end" transform="translate(1221.6,341.6) rotate(90)" x="0" y="0">Hγ </text>
<text class="s" font-size="9.6" fill="#87ceeb" fill-opacity="0.8" transform="translate(1221.1,342.3) rotate(90) scale(1.25,1)" x="0" y="0">{</text>
<text class="s" font-size="9.5" fill="#87ceeb" stroke="#87ceeb" stroke-width="0.12" text-anchor="end" transform="translate(1250.1,341.6) rotate(90)" x="0" y="0">Hγ </text>
<text class="s" font-size="9.6" fill="#87ceeb" fill-opacity="0.8" transform="translate(1249.6,342.3) rotate(90) scale(1.25,1)" x="0" y="0">{</text>
<rect x="101.5" y="348.5" width="1198.0" height="84.0" fill="#fff"/>
<clipPath id="cspec"><rect x="101.5" y="348.5" width="1198.0" height="84.0"/></clipPath><g clip-path="url(#cspec)">
<rect x="924.9" y="348.5" width="54.7" height="84.0" fill="#bfbf00"/>
<polygon points="101.5,378.8 103.9,378.3 106.2,378.5 108.6,380.8 110.9,377.9 113.3,378.1 115.6,379.5 118.0,379.3 120.4,381.0 122.7,380.2 125.1,378.6 127.4,378.6 129.8,379.5 132.1,381.8 134.5,381.6 136.9,379.6 139.2,382.2 141.6,382.4 143.9,384.4 146.3,384.2 148.6,384.8 151.0,387.3 153.4,389.0 155.7,389.7 158.1,391.3 160.4,390.8 162.8,390.0 165.1,391.4 167.5,391.1 169.9,391.4 172.2,392.8 174.6,395.1 176.9,393.5 179.3,392.8 181.6,390.9 184.0,389.4 186.4,388.2 188.7,390.2 191.1,390.3 193.4,391.8 195.8,390.7 198.1,392.8 200.5,393.1 202.9,392.4 205.2,393.4 207.6,393.8 209.9,395.0 212.3,396.2 214.6,395.9 217.0,397.3 219.4,395.4 221.7,396.1 224.1,395.3 226.4,395.2 228.8,395.6 231.1,395.2 233.5,393.6 235.8,393.8 238.2,393.9 240.6,394.9 242.9,394.7 245.3,394.4 247.6,393.4 250.0,394.1 252.3,395.7 254.7,396.3 257.1,397.0 259.4,397.7 261.8,397.3 264.1,398.6 266.5,399.5 268.8,398.5 271.2,399.4 273.6,398.9 275.9,399.3 278.3,399.9 280.6,400.3 283.0,399.7 285.3,400.6 287.7,400.3 290.1,401.4 292.4,401.1 294.8,400.9 297.1,400.8 299.5,401.3 301.8,400.9 304.2,401.5 306.6,400.9 308.9,400.9 311.3,401.6 313.6,402.2 316.0,401.2 318.3,401.5 320.7,401.5 323.1,401.5 325.4,401.7 327.8,401.8 330.1,401.8 332.5,402.7 334.8,402.1 337.2,402.5 339.6,402.0 341.9,402.3 344.3,403.0 346.6,402.8 349.0,403.0 351.3,402.8 353.7,402.7 356.1,403.3 358.4,403.7 360.8,403.5 363.1,403.8 365.5,403.6 367.8,403.4 370.2,403.5 372.6,403.5 374.9,403.3 377.3,403.4 379.6,404.0 382.0,403.7 384.3,403.4 386.7,403.8 389.1,403.6 391.4,404.6 393.8,404.0 396.1,404.0 398.5,404.4 400.8,404.7 403.2,403.9 405.6,403.9 407.9,404.4 410.3,404.1 412.6,404.8 415.0,404.2 417.3,405.1 419.7,405.3 422.1,405.0 424.4,404.7 426.8,405.7 429.1,405.4 431.5,404.9 433.8,405.6 436.2,404.9 438.6,405.3 440.9,405.4 443.3,405.3 445.6,405.4 448.0,405.7 450.3,406.0 452.7,405.9 455.1,405.7 457.4,406.5 459.8,406.1 462.1,405.8 464.5,406.7 466.8,406.4 469.2,406.2 471.5,406.5 473.9,406.6 476.3,406.2 478.6,406.9 481.0,407.2 483.3,406.6 485.7,407.1 488.0,406.5 490.4,407.0 492.8,407.1 495.1,407.5 497.5,406.9 499.8,407.5 502.2,407.1 504.5,407.9 506.9,407.1 509.3,407.4 511.6,407.3 514.0,407.6 516.3,407.6 518.7,408.0 521.0,408.1 523.4,407.9 525.8,407.8 528.1,408.3 530.5,408.3 532.8,407.9 535.2,407.7 537.5,408.1 539.9,408.0 542.3,407.7 544.6,408.5 547.0,408.5 549.3,408.2 551.7,408.2 554.0,408.5 556.4,408.5 558.8,408.3 561.1,408.6 563.5,408.2 565.8,408.3 568.2,408.8 570.5,408.9 572.9,408.5 575.3,408.3 577.6,408.7 580.0,409.0 582.3,409.0 584.7,408.3 587.0,408.9 589.4,408.3 591.8,408.4 594.1,408.6 596.5,409.0 598.8,408.7 601.2,408.9 603.5,408.5 605.9,408.6 608.3,408.5 610.6,408.8 613.0,408.7 615.3,409.2 617.7,409.1 620.0,408.6 622.4,408.7 624.8,409.0 627.1,408.9 629.5,409.0 631.8,409.3 634.2,409.1 636.5,408.7 638.9,409.2 641.3,409.3 643.6,409.3 646.0,409.4 648.3,409.2 650.7,408.9 653.0,409.1 655.4,409.4 657.8,409.3 660.1,408.9 662.5,409.4 664.8,409.4 667.2,409.2 669.5,409.3 671.9,409.2 674.3,409.0 676.6,409.5 679.0,409.1 681.3,409.1 683.7,408.9 686.0,409.6 688.4,409.3 690.8,409.2 693.1,409.3 695.5,409.6 697.8,409.0 700.2,409.0 702.5,409.5 704.9,409.4 707.2,409.5 709.6,409.5 712.0,409.7 714.3,409.6 716.7,409.5 719.0,409.7 721.4,409.7 723.7,409.1 726.1,409.2 728.5,409.8 730.8,409.5 733.2,409.6 735.5,409.3 737.9,409.6 740.2,409.3 742.6,409.8 745.0,409.8 747.3,409.3 749.7,409.8 752.0,409.8 754.4,409.6 756.7,409.8 759.1,409.4 761.5,409.8 763.8,409.7 766.2,409.7 768.5,409.5 770.9,409.4 773.2,409.5 775.6,409.7 778.0,409.6 780.3,409.5 782.7,409.9 785.0,409.8 787.4,410.1 789.7,409.9 792.1,409.9 794.5,409.6 796.8,410.1 799.2,410.1 801.5,409.5 803.9,409.7 806.2,409.9 808.6,410.0 811.0,409.8 813.3,409.7 815.7,409.9 818.0,409.8 820.4,409.6 822.7,410.2 825.1,409.7 827.5,410.0 829.8,409.8 832.2,410.0 834.5,410.0 836.9,409.8 839.2,410.4 841.6,410.4 844.0,410.1 846.3,410.2 848.7,410.3 851.0,410.1 853.4,410.0 855.7,410.3 858.1,409.9 860.5,410.0 862.8,410.3 865.2,410.0 867.5,410.6 869.9,410.6 872.2,410.0 874.6,410.1 877.0,410.2 879.3,410.3 881.7,410.4 884.0,410.4 886.4,410.6 888.7,410.5 891.1,410.6 893.5,410.5 895.8,410.5 898.2,410.3 900.5,410.4 902.9,410.5 905.2,410.6 907.6,410.4 910.0,410.7 912.3,410.9 914.7,410.5 917.0,410.5 919.4,410.3 921.7,410.5 924.1,410.5 926.5,410.4 928.8,410.6 931.2,410.6 933.5,410.9 935.9,410.5 938.2,410.5 940.6,410.9 942.9,410.9 945.3,410.7 947.7,410.6 950.0,410.9 952.4,410.7 954.7,410.7 957.1,410.7 959.4,411.0 961.8,410.9 964.2,411.2 966.5,410.8 968.9,411.3 971.2,410.8 973.6,410.9 975.9,411.1 978.3,410.8 980.7,411.2 983.0,410.8 985.4,411.4 987.7,411.1 990.1,411.3 992.4,411.1 994.8,411.0 997.2,411.4 999.5,410.9 1001.9,411.2 1004.2,411.0 1006.6,411.3 1008.9,410.9 1011.3,411.4 1013.7,411.4 1016.0,411.4 1018.4,411.4 1020.7,411.0 1023.1,411.0 1025.4,410.9 1027.8,411.1 1030.2,411.4 1032.5,411.5 1034.9,411.3 1037.2,411.1 1039.6,411.5 1041.9,411.2 1044.3,411.4 1046.7,411.3 1049.0,411.2 1051.4,410.9 1053.7,411.1 1056.1,411.3 1058.4,411.2 1060.8,411.1 1063.2,411.3 1065.5,411.2 1067.9,411.1 1070.2,411.4 1072.6,411.0 1074.9,411.5 1077.3,411.4 1079.7,411.5 1082.0,411.5 1084.4,411.0 1086.7,411.3 1089.1,411.5 1091.4,411.1 1093.8,411.1 1096.2,411.6 1098.5,411.3 1100.9,411.3 1103.2,411.5 1105.6,411.3 1107.9,411.6 1110.3,411.0 1112.7,411.3 1115.0,411.4 1117.4,411.4 1119.7,411.1 1122.1,411.2 1124.4,411.6 1126.8,411.4 1129.2,411.1 1131.5,411.4 1133.9,411.2 1136.2,411.6 1138.6,411.4 1140.9,411.0 1143.3,411.4 1145.7,411.4 1148.0,411.3 1150.4,411.6 1152.7,411.6 1155.1,411.1 1157.4,411.6 1159.8,411.2 1162.2,411.3 1164.5,411.5 1166.9,411.1 1169.2,411.6 1171.6,411.5 1173.9,411.5 1176.3,411.6 1178.6,411.1 1181.0,411.6 1183.4,411.3 1185.7,411.5 1188.1,411.3 1190.4,411.5 1192.8,411.5 1195.1,411.2 1197.5,411.4 1199.9,411.7 1202.2,411.4 1204.6,411.3 1206.9,411.7 1209.3,411.7 1211.6,411.5 1214.0,411.5 1216.4,411.3 1218.7,411.5 1221.1,411.3 1223.4,411.1 1225.8,411.5 1228.1,411.1 1230.5,411.4 1232.9,411.4 1235.2,411.1 1237.6,411.4 1239.9,411.6 1242.3,411.4 1244.6,411.6 1247.0,411.7 1249.4,411.5 1251.7,411.1 1254.1,411.5 1256.4,411.2 1258.8,411.2 1261.1,411.5 1263.5,411.5 1265.9,411.2 1268.2,411.1 1270.6,411.6 1272.9,411.2 1275.3,411.7 1277.6,411.2 1280.0,411.2 1282.4,411.4 1284.7,411.5 1287.1,411.7 1289.4,411.6 1291.8,412.2 1294.1,413.5 1296.5,414.8 1296.5,423.3 1294.1,424.4 1291.8,426.2 1289.4,425.9 1287.1,426.1 1284.7,426.5 1282.4,426.3 1280.0,426.3 1277.6,426.6 1275.3,426.3 1272.9,426.7 1270.6,426.3 1268.2,426.4 1265.9,426.6 1263.5,426.5 1261.1,426.7 1258.8,426.7 1256.4,426.5 1254.1,426.8 1251.7,426.5 1249.4,426.4 1247.0,426.4 1244.6,426.6 1242.3,426.7 1239.9,426.5 1237.6,426.8 1235.2,426.5 1232.9,426.5 1230.5,426.8 1228.1,426.4 1225.8,426.4 1223.4,426.9 1221.1,426.9 1218.7,426.6 1216.4,426.9 1214.0,426.6 1211.6,426.3 1209.3,426.5 1206.9,426.6 1204.6,426.8 1202.2,426.6 1199.9,426.8 1197.5,426.7 1195.1,426.4 1192.8,426.6 1190.4,426.7 1188.1,426.9 1185.7,426.6 1183.4,426.5 1181.0,426.4 1178.6,426.7 1176.3,426.6 1173.9,426.8 1171.6,426.8 1169.2,426.6 1166.9,426.3 1164.5,426.9 1162.2,426.4 1159.8,426.9 1157.4,426.3 1155.1,426.9 1152.7,426.6 1150.4,426.6 1148.0,426.4 1145.7,426.5 1143.3,426.5 1140.9,426.5 1138.6,426.9 1136.2,426.8 1133.9,426.9 1131.5,427.0 1129.2,426.9 1126.8,426.9 1124.4,426.8 1122.1,426.4 1119.7,426.8 1117.4,426.7 1115.0,426.9 1112.7,426.4 1110.3,426.8 1107.9,426.6 1105.6,426.7 1103.2,427.0 1100.9,426.4 1098.5,426.6 1096.2,426.6 1093.8,426.6 1091.4,426.4 1089.1,426.6 1086.7,427.0 1084.4,426.8 1082.0,426.7 1079.7,426.6 1077.3,426.9 1074.9,426.7 1072.6,426.8 1070.2,426.7 1067.9,426.8 1065.5,426.9 1063.2,426.6 1060.8,427.0 1058.4,426.7 1056.1,426.5 1053.7,426.9 1051.4,426.5 1049.0,427.1 1046.7,426.9 1044.3,426.9 1041.9,426.7 1039.6,426.7 1037.2,427.0 1034.9,426.8 1032.5,426.6 1030.2,426.6 1027.8,427.1 1025.4,427.1 1023.1,427.0 1020.7,427.0 1018.4,427.0 1016.0,426.9 1013.7,426.6 1011.3,426.7 1008.9,426.8 1006.6,427.0 1004.2,427.1 1001.9,427.1 999.5,427.2 997.2,426.9 994.8,427.0 992.4,427.0 990.1,426.7 987.7,427.0 985.4,426.7 983.0,426.7 980.7,427.0 978.3,426.8 975.9,427.0 973.6,426.9 971.2,427.2 968.9,427.1 966.5,426.9 964.2,427.1 961.8,427.3 959.4,426.9 957.1,426.9 954.7,427.0 952.4,427.2 950.0,426.9 947.7,427.2 945.3,427.4 942.9,427.0 940.6,426.9 938.2,427.3 935.9,427.1 933.5,427.3 931.2,427.4 928.8,427.5 926.5,427.6 924.1,427.4 921.7,427.1 919.4,427.2 917.0,427.3 914.7,427.6 912.3,427.3 910.0,427.2 907.6,427.5 905.2,427.5 902.9,427.7 900.5,427.6 898.2,427.8 895.8,427.9 893.5,427.7 891.1,427.5 888.7,427.3 886.4,427.5 884.0,427.7 881.7,427.3 879.3,427.9 877.0,427.9 874.6,427.6 872.2,427.5 869.9,427.9 867.5,427.5 865.2,427.8 862.8,427.5 860.5,427.9 858.1,428.0 855.7,427.6 853.4,427.7 851.0,427.8 848.7,427.7 846.3,427.7 844.0,428.2 841.6,428.0 839.2,428.3 836.9,427.9 834.5,427.7 832.2,428.3 829.8,428.3 827.5,428.0 825.1,428.0 822.7,427.9 820.4,428.3 818.0,428.1 815.7,427.9 813.3,427.8 811.0,428.4 808.6,427.8 806.2,428.1 803.9,428.0 801.5,428.5 799.2,428.1 796.8,427.9 794.5,428.3 792.1,427.9 789.7,428.4 787.4,428.0 785.0,428.0 782.7,428.5 780.3,428.5 778.0,428.7 775.6,428.6 773.2,428.4 770.9,428.5 768.5,428.4 766.2,428.2 763.8,428.1 761.5,428.2 759.1,428.1 756.7,428.1 754.4,428.5 752.0,428.1 749.7,428.1 747.3,428.3 745.0,428.7 742.6,428.3 740.2,428.3 737.9,428.5 735.5,428.8 733.2,428.6 730.8,428.6 728.5,428.6 726.1,428.3 723.7,428.6 721.4,428.6 719.0,428.5 716.7,428.6 714.3,428.6 712.0,429.0 709.6,428.3 707.2,428.6 704.9,428.3 702.5,428.3 700.2,428.3 697.8,428.7 695.5,428.4 693.1,428.6 690.8,429.1 688.4,428.4 686.0,429.0 683.7,428.4 681.3,428.7 679.0,429.1 676.6,428.6 674.3,429.0 671.9,428.6 669.5,428.7 667.2,429.2 664.8,428.5 662.5,428.5 660.1,428.6 657.8,429.0 655.4,429.0 653.0,429.3 650.7,429.1 648.3,429.3 646.0,429.3 643.6,428.9 641.3,428.8 638.9,428.8 636.5,428.7 634.2,428.9 631.8,428.7 629.5,428.7 627.1,429.0 624.8,429.4 622.4,428.7 620.0,429.1 617.7,428.7 615.3,428.8 613.0,429.1 610.6,429.2 608.3,429.2 605.9,429.1 603.5,429.3 601.2,428.9 598.8,429.1 596.5,429.1 594.1,429.2 591.8,429.0 589.4,429.5 587.0,429.0 584.7,429.5 582.3,429.1 580.0,429.6 577.6,429.6 575.3,429.4 572.9,429.2 570.5,429.2 568.2,429.6 565.8,429.7 563.5,429.3 561.1,429.5 558.8,429.3 556.4,429.9 554.0,429.7 551.7,429.8 549.3,430.1 547.0,429.9 544.6,430.0 542.3,429.8 539.9,429.9 537.5,429.8 535.2,429.7 532.8,430.2 530.5,429.7 528.1,430.0 525.8,429.7 523.4,429.8 521.0,430.3 518.7,430.6 516.3,429.9 514.0,430.7 511.6,430.1 509.3,430.0 506.9,430.9 504.5,430.8 502.2,430.8 499.8,431.0 497.5,430.4 495.1,430.9 492.8,430.8 490.4,431.0 488.0,430.7 485.7,431.4 483.3,431.1 481.0,431.6 478.6,431.7 476.3,431.1 473.9,431.4 471.5,432.0 469.2,431.8 466.8,431.8 464.5,432.0 462.1,431.9 459.8,432.3 457.4,431.7 455.1,432.1 452.7,432.0 450.3,432.2 448.0,432.1 445.6,432.1 443.3,432.0 440.9,432.6 438.6,432.5 436.2,432.4 433.8,432.3 431.5,432.5 429.1,433.3 426.8,432.9 424.4,433.3 422.1,432.8 419.7,433.2 417.3,433.1 415.0,433.2 412.6,433.1 410.3,433.4 407.9,433.2 405.6,434.0 403.2,433.5 400.8,433.4 398.5,433.7 396.1,434.3 393.8,433.4 391.4,434.0 389.1,433.4 386.7,433.9 384.3,434.7 382.0,434.2 379.6,433.8 377.3,434.4 374.9,434.2 372.6,434.9 370.2,434.2 367.8,434.0 365.5,434.0 363.1,435.1 360.8,434.7 358.4,434.8 356.1,435.5 353.7,435.2 351.3,435.1 349.0,434.7 346.6,435.0 344.3,435.1 341.9,435.3 339.6,435.2 337.2,436.2 334.8,436.2 332.5,435.5 330.1,436.3 327.8,436.4 325.4,436.0 323.1,436.2 320.7,435.7 318.3,436.5 316.0,436.2 313.6,436.7 311.3,436.4 308.9,437.1 306.6,436.9 304.2,437.2 301.8,437.3 299.5,437.1 297.1,437.4 294.8,437.6 292.4,437.5 290.1,437.4 287.7,437.6 285.3,438.4 283.0,438.2 280.6,438.1 278.3,438.6 275.9,438.9 273.6,439.0 271.2,439.3 268.8,439.6 266.5,438.8 264.1,439.1 261.8,440.1 259.4,441.4 257.1,440.5 254.7,441.4 252.3,442.8 250.0,442.9 247.6,444.3 245.3,443.9 242.9,444.6 240.6,443.8 238.2,444.4 235.8,444.7 233.5,443.0 231.1,443.7 228.8,444.1 226.4,442.7 224.1,443.1 221.7,441.6 219.4,441.8 217.0,440.5 214.6,442.7 212.3,441.9 209.9,442.7 207.6,443.7 205.2,445.8 202.9,446.3 200.5,445.5 198.1,447.2 195.8,447.5 193.4,447.7 191.1,448.3 188.7,447.8 186.4,449.8 184.0,449.9 181.6,448.9 179.3,445.3 176.9,445.0 174.6,444.5 172.2,445.4 169.9,444.6 167.5,445.5 165.1,446.9 162.8,447.2 160.4,447.1 158.1,448.2 155.7,449.0 153.4,448.8 151.0,450.2 148.6,451.6 146.3,454.5 143.9,455.6 141.6,456.0 139.2,457.9 136.9,458.0 134.5,456.4 132.1,458.9 129.8,457.0 127.4,457.3 125.1,457.4 122.7,459.9 120.4,457.7 118.0,458.8 115.6,457.8 113.3,457.4 110.9,459.1 108.6,458.6 106.2,460.1 103.9,460.1 101.5,459.5" fill="#808080" fill-opacity="0.5"/>
<rect x="121.7" y="348.5" width="12.9" height="84.0" fill="#808080" fill-opacity="0.72"/>
<path d="M121.7,352.1 L134.6,340.7 M121.7,375.0 L134.6,363.6 M121.7,397.9 L134.6,386.5 M121.7,420.8 L134.6,409.4 M121.7,443.7 L134.6,432.3" stroke="#000" stroke-width="1.1" fill="none"/>
<rect x="121.7" y="346.5" width="12.9" height="88.0" fill="none" stroke="#333" stroke-width="1.3"/>
<rect x="1254.4" y="348.5" width="6.1" height="84.0" fill="#808080" fill-opacity="0.72"/>
<path d="M1254.4,340.8 L1260.6,335.4 M1254.4,363.7 L1260.6,358.3 M1254.4,386.6 L1260.6,381.2 M1254.4,409.5 L1260.6,404.1 M1254.4,432.4 L1260.6,427.0" stroke="#000" stroke-width="1.1" fill="none"/>
<rect x="1254.4" y="346.5" width="6.1" height="88.0" fill="none" stroke="#333" stroke-width="1.3"/>
<line x1="101.5" x2="1299.5" y1="419.0" y2="419.0" stroke="#555" stroke-width="1"/>
<polyline points="101.5,409.6 102.5,409.6 104.6,409.6 106.1,370.0 107.4,404.3 108.3,400.0 110.0,432.1 111.7,382.9 113.2,353.9 114.3,352.9 115.8,404.3 117.5,372.1 119.0,393.6 120.7,432.1 122.4,432.1 123.9,402.1 125.4,419.3 127.1,393.6 128.9,419.3 130.4,402.1 131.9,376.4 133.6,395.7 135.7,410.7 137.9,386.1 139.4,421.4 141.1,432.1 142.6,393.6 143.9,360.4 145.4,410.7 146.9,432.1 148.6,410.7 150.3,389.3 151.8,383.9 153.3,412.9 155.0,391.4 156.5,402.1 158.6,432.1 160.4,432.1 161.9,415.0 163.1,402.1 164.6,425.7 166.4,382.9 167.9,410.7 171.1,394.6 173.2,406.4 175.4,405.4 177.5,391.4 179.0,415.0 180.7,394.6 182.2,423.6 183.5,396.8 185.0,410.7 186.5,430.0 188.6,406.4 189.9,423.6 191.9,398.9 193.6,397.9 195.3,413.9 196.8,425.7 198.9,415.0 201.1,408.6 204.3,432.1 206.4,417.1 208.6,404.3 209.9,398.9 211.8,413.9 213.5,402.1 215.0,418.2 217.1,391.4 218.6,415.0 220.4,400.0 221.9,420.4 223.6,409.6 225.7,421.4 227.9,422.5 230.4,404.3 232.1,407.5 234.3,396.8 236.4,408.6 238.6,407.5 240.7,415.0 242.9,423.6 244.4,432.1 246.1,419.3 247.6,424.6 249.3,406.4 251.4,410.7 253.6,412.9 256.1,408.6 258.3,404.3 260.4,421.4 262.1,404.3 264.3,406.4 265.8,396.8 267.5,404.3 269.6,402.1 271.8,408.6 273.9,404.3 276.1,412.9 278.6,401.1 280.4,410.7 282.5,404.3 284.2,394.6 285.7,415.0 286.8,432.1 288.9,415.0 291.1,402.1 293.2,413.9 294.7,402.1 296.4,396.8 298.1,425.7 300.1,406.4 301.8,415.0 303.9,418.2 306.1,400.0 308.2,397.9 309.7,410.7 311.4,396.8 313.6,419.3 315.1,427.9 316.8,395.7 318.9,412.9 320.6,421.4 323.2,404.3 324.3,397.9 326.4,408.6 328.1,401.1 330.1,412.9 331.8,408.6 335.0,390.4 337.1,396.8 339.3,402.1 340.8,424.6 342.5,404.3 344.0,412.9 345.7,400.0 347.9,383.9 349.6,404.3 351.5,377.5 353.2,395.7 355.4,425.7 356.9,402.1 358.6,412.9 360.7,428.9 362.9,412.9 365.4,400.0 367.1,407.5 368.6,402.1 370.8,408.6 372.5,406.4 374.6,418.2 376.8,402.1 378.3,408.6 380.0,392.5 381.5,408.6 383.2,417.1 384.7,405.4 386.4,418.2 388.6,393.6 390.1,370.0 391.8,391.4 393.3,390.4 394.8,402.1 396.7,392.5 397.6,415.0 399.3,395.7 401.0,391.4 402.5,412.9 404.2,390.4 405.7,396.8 407.4,404.3 408.9,400.0 410.4,410.7 412.1,383.9 413.9,402.1 415.4,406.4 417.1,413.9 418.6,376.4 420.3,397.9 421.8,402.1 423.9,392.5 425.0,396.8 426.7,383.9 428.2,395.7 429.7,396.8 431.4,385.0 432.9,426.8 434.6,404.3 436.1,400.0 437.9,391.4 439.4,402.1 441.1,400.0 443.2,405.4 445.4,415.0 447.5,388.2 449.6,389.3 451.8,395.7 452.9,404.3 454.4,391.4 456.1,386.1 457.6,406.4 459.3,413.9 461.4,410.7 463.6,395.7 465.1,391.4 466.8,404.3 468.9,387.1 470.4,404.3 472.1,408.6 473.9,419.3 475.4,393.6 476.9,404.3 478.6,400.0 480.7,397.9 482.2,418.2 483.9,406.4 485.4,391.4 487.1,408.6 489.3,387.1 491.4,404.3 493.6,401.1 495.7,397.9 497.9,404.3 499.4,406.4 501.1,381.8 502.8,400.0 504.3,404.3 506.0,402.1 507.9,386.1 509.6,393.6 511.8,397.9 513.3,396.8 515.0,402.1 516.7,413.9 518.2,402.1 520.4,396.8 521.9,402.1 523.6,400.0 525.1,403.2 526.8,400.0 528.3,412.9 530.4,427.9 532.1,410.7 533.9,408.6 535.4,410.7 537.5,408.6 539.6,410.7 541.1,406.4 542.9,412.9 544.4,417.1 546.1,395.7 547.6,401.1 549.3,397.9 551.4,403.2 553.6,402.1 555.7,406.4 557.9,402.1 560.0,396.8 562.1,411.8 563.6,415.0 565.4,404.3 567.5,408.6 569.6,404.3 571.8,406.4 573.9,412.9 576.1,397.9 578.2,396.8 579.7,406.4 581.4,415.0 582.9,395.7 584.6,392.5 586.8,415.0 588.9,408.6 591.1,404.3 593.2,391.4 595.4,396.8 597.5,395.7 599.6,410.7 601.8,385.0 603.9,402.1 606.1,406.4 608.2,412.9 610.4,400.0 612.5,396.8 614.6,400.0 617.9,403.2 621.1,395.7 623.2,402.1 626.4,396.8 628.6,401.1 630.7,409.6 632.2,402.1 633.9,403.2 636.1,392.5 638.2,396.8 640.4,391.4 642.5,394.6 645.7,394.6 647.9,397.9 650.4,391.4 652.1,398.9 654.3,392.5 656.0,402.1 657.5,412.9 659.0,404.3 660.7,389.3 662.9,402.1 664.6,405.4 666.7,400.0 668.2,403.2 670.4,395.7 673.6,387.1 675.7,394.6 677.9,397.9 680.0,391.4 682.1,395.7 684.3,388.2 686.4,391.4 688.6,389.3 690.7,395.7 692.9,390.4 694.8,402.1 696.7,395.7 698.2,391.4 699.7,394.6 701.4,386.1 703.6,375.4 705.1,397.9 706.8,394.6 708.3,391.4 710.0,397.9 712.1,382.9 713.9,377.5 715.4,396.8 717.1,383.9 718.6,388.2 720.3,386.1 722.4,390.4 723.9,395.7 725.6,390.4 727.1,387.1 729.3,379.6 731.0,386.1 733.1,381.8 735.3,377.5 737.4,376.4 738.9,381.8 741.1,383.9 743.2,388.2 745.4,381.8 747.1,401.1 748.6,391.4 750.3,394.6 751.8,387.1 753.9,381.8 755.4,378.6 757.1,386.1 758.9,392.5 760.4,376.4 762.5,382.9 764.6,375.4 766.8,386.1 768.9,377.5 771.1,388.2 772.1,396.8 773.9,381.8 775.4,375.4 777.5,385.0 779.6,388.2 781.4,393.6 782.9,387.1 785.0,381.8 787.1,380.7 789.3,388.2 791.4,391.4 793.6,388.2 795.3,394.6 796.8,388.2 798.9,381.8 801.1,382.9 803.2,388.2 805.4,389.3 807.5,386.1 808.6,379.6 810.3,388.2 812.4,378.6 813.9,386.1 816.1,393.6 818.2,388.2 819.3,379.6 821.4,386.1 823.1,390.4 824.6,380.7 826.8,381.8 828.9,382.9 831.1,381.8 833.2,379.6 835.4,380.7 836.9,374.3 837.9,380.7 839.0,368.9 840.3,386.1 841.8,388.2 843.3,390.4 845.0,388.2 846.7,382.9 848.2,405.4 849.7,393.6 851.4,402.1 852.5,382.9 854.2,402.1 855.7,391.4 857.4,398.9 858.9,386.1 861.1,382.9 862.1,394.6 864.3,385.0 866.4,394.6 868.1,387.1 870.3,397.9 872.4,389.3 874.6,393.6 876.7,391.4 878.4,389.3 880.4,395.7 882.5,396.8 884.6,397.9 886.4,381.8 888.5,378.6 890.4,390.4 892.1,392.5 893.9,404.3 895.4,396.8 896.9,388.2 898.6,398.9 900.7,388.2 902.4,387.1 904.6,389.3 906.1,393.6 907.6,407.5 909.3,390.4 911.4,385.0 913.1,392.5 915.3,388.2 917.4,391.4 919.6,390.4 921.7,389.3 923.9,377.5 926.0,389.3 928.1,381.8 930.3,379.6 932.4,382.9 934.6,376.4 936.7,373.2 938.9,387.1 941.0,382.9 943.1,380.7 944.9,375.4 946.8,383.9 948.9,386.1 951.1,373.2 952.8,370.0 954.3,377.5 956.0,378.6 957.5,389.3 959.0,396.8 960.7,395.7 962.4,390.4 964.6,396.8 966.3,398.9 968.2,391.4 969.7,382.9 971.4,391.4 973.6,387.1 975.7,390.4 977.9,388.2 980.0,393.6 982.1,390.4 984.3,392.5 986.4,390.4 988.6,393.6 990.7,391.4 992.4,381.8 993.9,391.4 995.0,393.6 997.2,389.8 999.4,388.7 1001.6,393.1 1003.9,386.5 1006.1,387.6 1007.8,402.0 1009.4,395.4 1011.6,383.2 1013.8,387.6 1016.0,389.8 1018.3,387.6 1020.5,394.3 1022.7,392.0 1024.5,383.2 1026.0,397.6 1028.2,392.0 1030.4,385.4 1032.6,387.6 1034.9,386.5 1037.1,387.6 1038.2,393.1 1040.4,386.5 1042.6,387.6 1044.8,385.4 1047.0,392.0 1049.3,392.0 1051.5,382.1 1053.0,381.0 1054.8,386.5 1057.0,387.6 1059.2,397.6 1061.4,396.5 1063.6,392.0 1065.9,382.1 1068.1,389.8 1070.3,389.8 1072.5,390.9 1074.7,387.6 1076.9,385.4 1078.7,384.3 1080.3,379.9 1081.8,381.0 1083.6,388.7 1085.8,398.7 1087.6,405.3 1089.1,396.5 1091.3,398.7 1093.5,392.0 1095.8,386.5 1098.0,398.7 1100.2,392.0 1102.4,387.6 1104.6,389.8 1106.4,399.8 1108.4,399.8 1110.1,392.0 1112.4,385.4 1114.1,393.1 1115.7,384.3 1117.9,387.6 1120.1,377.6 1122.3,376.5 1124.1,381.0 1125.6,376.5 1127.4,386.5 1129.6,383.2 1131.8,381.0 1134.1,389.8 1136.3,385.4 1137.8,381.0 1140.0,390.9 1141.6,379.9 1143.4,389.8 1145.1,377.6 1146.7,371.0 1148.5,377.6 1150.0,382.1 1152.2,384.3 1154.0,376.5 1156.2,381.0 1158.4,379.9 1161.1,384.3 1162.8,378.8 1164.4,366.6 1165.9,379.9 1167.7,368.8 1169.5,375.4 1171.0,378.8 1172.8,379.9 1174.8,374.3 1176.6,384.3 1178.3,375.4 1180.6,383.2 1182.8,375.4 1185.0,382.1 1186.5,367.7 1188.3,379.9 1190.5,376.5 1192.7,378.8 1195.0,377.6 1196.5,375.4 1198.3,381.0 1200.5,377.6 1202.7,376.5 1204.9,379.9 1206.5,382.1 1208.7,363.3 1210.2,372.1 1212.0,373.2 1213.8,375.4 1215.3,368.8 1217.1,377.6 1218.6,384.3 1220.9,379.9 1223.1,366.6 1224.8,381.0 1227.1,379.9 1229.1,365.5 1230.8,369.9 1233.0,367.7 1235.3,365.5 1236.4,364.4 1238.1,368.8 1239.7,371.0 1241.2,375.4 1243.0,369.9 1244.8,377.6 1246.3,368.8 1248.1,379.9 1249.7,386.5 1251.4,388.7 1252.5,395.4 1254.1,387.6 1256.3,383.2 1258.5,378.8 1260.3,376.5 1261.8,386.5 1263.6,377.6 1265.2,372.1 1266.9,385.4 1268.5,373.2 1270.2,371.0 1271.8,377.6 1273.6,371.0 1275.8,369.9 1278.0,387.6 1279.5,377.6 1281.3,376.5 1282.9,387.6 1285.1,385.4 1286.9,379.9 1288.4,386.5 1290.0,378.8 1291.7,381.0 1293.5,385.4 1295.0,376.5 1296.8,379.9 1298.4,381.0 1300.1,379.9 1299.5,379.9" fill="none" stroke="#0000ff" stroke-width="1.35" stroke-linejoin="round"/>
<line x1="952.4" x2="952.4" y1="348.5" y2="432.5" stroke="#000" stroke-width="1" stroke-dasharray="2,1.6"/>
<line x1="1235.8" x2="1235.8" y1="348.5" y2="432.5" stroke="#777" stroke-width="1.3" stroke-dasharray="4.5,2.5"/>
</g>
<rect x="101.5" y="348.5" width="1198.0" height="84.0" fill="none" stroke="#222" stroke-width="1"/>
<line x1="101.5" x2="101.5" y1="432.5" y2="436.5" stroke="#222" stroke-width="0.9"/>
<text class="s" x="101.50" y="447.50" font-size="9.80" text-anchor="middle" stroke="#000" stroke-width="0.14" >3500</text>
<line x1="160.4" x2="160.4" y1="432.5" y2="436.5" stroke="#222" stroke-width="0.9"/>
<text class="s" x="160.43" y="447.50" font-size="9.80" text-anchor="middle" stroke="#000" stroke-width="0.14" >3600</text>
<line x1="219.4" x2="219.4" y1="432.5" y2="436.5" stroke="#222" stroke-width="0.9"/>
<text class="s" x="219.35" y="447.50" font-size="9.80" text-anchor="middle" stroke="#000" stroke-width="0.14" >3700</text>
<line x1="278.3" x2="278.3" y1="432.5" y2="436.5" stroke="#222" stroke-width="0.9"/>
<text class="s" x="278.27" y="447.50" font-size="9.80" text-anchor="middle" stroke="#000" stroke-width="0.14" >3800</text>
<line x1="337.2" x2="337.2" y1="432.5" y2="436.5" stroke="#222" stroke-width="0.9"/>
<text class="s" x="337.20" y="447.50" font-size="9.80" text-anchor="middle" stroke="#000" stroke-width="0.14" >3900</text>
<line x1="396.1" x2="396.1" y1="432.5" y2="436.5" stroke="#222" stroke-width="0.9"/>
<text class="s" x="396.12" y="447.50" font-size="9.80" text-anchor="middle" stroke="#000" stroke-width="0.14" >4000</text>
<line x1="455.1" x2="455.1" y1="432.5" y2="436.5" stroke="#222" stroke-width="0.9"/>
<text class="s" x="455.05" y="447.50" font-size="9.80" text-anchor="middle" stroke="#000" stroke-width="0.14" >4100</text>
<line x1="514.0" x2="514.0" y1="432.5" y2="436.5" stroke="#222" stroke-width="0.9"/>
<text class="s" x="513.98" y="447.50" font-size="9.80" text-anchor="middle" stroke="#000" stroke-width="0.14" >4200</text>
<line x1="572.9" x2="572.9" y1="432.5" y2="436.5" stroke="#222" stroke-width="0.9"/>
<text class="s" x="572.90" y="447.50" font-size="9.80" text-anchor="middle" stroke="#000" stroke-width="0.14" >4300</text>
<line x1="631.8" x2="631.8" y1="432.5" y2="436.5" stroke="#222" stroke-width="0.9"/>
<text class="s" x="631.83" y="447.50" font-size="9.80" text-anchor="middle" stroke="#000" stroke-width="0.14" >4400</text>
<line x1="690.8" x2="690.8" y1="432.5" y2="436.5" stroke="#222" stroke-width="0.9"/>
<text class="s" x="690.75" y="447.50" font-size="9.80" text-anchor="middle" stroke="#000" stroke-width="0.14" >4500</text>
<line x1="749.7" x2="749.7" y1="432.5" y2="436.5" stroke="#222" stroke-width="0.9"/>
<text class="s" x="749.68" y="447.50" font-size="9.80" text-anchor="middle" stroke="#000" stroke-width="0.14" >4600</text>
<line x1="808.6" x2="808.6" y1="432.5" y2="436.5" stroke="#222" stroke-width="0.9"/>
<text class="s" x="808.60" y="447.50" font-size="9.80" text-anchor="middle" stroke="#000" stroke-width="0.14" >4700</text>
<line x1="867.5" x2="867.5" y1="432.5" y2="436.5" stroke="#222" stroke-width="0.9"/>
<text class="s" x="867.53" y="447.50" font-size="9.80" text-anchor="middle" stroke="#000" stroke-width="0.14" >4800</text>
<line x1="926.5" x2="926.5" y1="432.5" y2="436.5" stroke="#222" stroke-width="0.9"/>
<text class="s" x="926.45" y="447.50" font-size="9.80" text-anchor="middle" stroke="#000" stroke-width="0.14" >4900</text>
<line x1="985.4" x2="985.4" y1="432.5" y2="436.5" stroke="#222" stroke-width="0.9"/>
<text class="s" x="985.38" y="447.50" font-size="9.80" text-anchor="middle" stroke="#000" stroke-width="0.14" >5000</text>
<line x1="1044.3" x2="1044.3" y1="432.5" y2="436.5" stroke="#222" stroke-width="0.9"/>
<text class="s" x="1044.30" y="447.50" font-size="9.80" text-anchor="middle" stroke="#000" stroke-width="0.14" >5100</text>
<line x1="1103.2" x2="1103.2" y1="432.5" y2="436.5" stroke="#222" stroke-width="0.9"/>
<text class="s" x="1103.23" y="447.50" font-size="9.80" text-anchor="middle" stroke="#000" stroke-width="0.14" >5200</text>
<line x1="1162.2" x2="1162.2" y1="432.5" y2="436.5" stroke="#222" stroke-width="0.9"/>
<text class="s" x="1162.15" y="447.50" font-size="9.80" text-anchor="middle" stroke="#000" stroke-width="0.14" >5300</text>
<line x1="1221.1" x2="1221.1" y1="432.5" y2="436.5" stroke="#222" stroke-width="0.9"/>
<text class="s" x="1221.08" y="447.50" font-size="9.80" text-anchor="middle" stroke="#000" stroke-width="0.14" >5400</text>
<line x1="1280.0" x2="1280.0" y1="432.5" y2="436.5" stroke="#222" stroke-width="0.9"/>
<text class="s" x="1280.00" y="447.50" font-size="9.80" text-anchor="middle" stroke="#000" stroke-width="0.14" >5500</text>
<line x1="97.5" x2="101.5" y1="419.0" y2="419.0" stroke="#222" stroke-width="0.9"/>
<text class="s" x="94.50" y="422.70" font-size="9.80" text-anchor="end" stroke="#000" stroke-width="0.14" >0</text>
<line x1="97.5" x2="101.5" y1="383.8" y2="383.8" stroke="#222" stroke-width="0.9"/>
<text class="s" x="94.50" y="387.45" font-size="9.80" text-anchor="end" stroke="#000" stroke-width="0.14" >5</text>
<line x1="97.5" x2="101.5" y1="348.5" y2="348.5" stroke="#222" stroke-width="0.9"/>
<text class="s" x="94.50" y="352.20" font-size="9.80" text-anchor="end" stroke="#000" stroke-width="0.14" >10</text>
<text class="s" x="101.2" y="346.5" font-size="9.8">e<tspan font-size="6.8" dy="-3.6">−17</tspan><tspan dy="3.6">x2</tspan><tspan class="i">Å</tspan></text>
<rect x="429.0" y="450.3" width="18.5" height="6.4" fill="#ff0000"/>
<text class="s" x="452.60" y="456.90" font-size="7.80" stroke="#000" stroke-width="0" >Lyα</text>
<rect x="483.0" y="450.3" width="18.5" height="6.4" fill="#008000"/>
<text class="s" x="506.60" y="456.90" font-size="7.80" stroke="#000" stroke-width="0" >OII</text>
<rect x="536.5" y="450.3" width="18.5" height="6.4" fill="#8a2be2"/>
<text class="s" x="560.10" y="456.90" font-size="7.80" stroke="#000" stroke-width="0" >CIV</text>
<rect x="590.5" y="450.3" width="18.5" height="6.4" fill="#800080"/>
<text class="s" x="614.10" y="456.90" font-size="7.80" stroke="#000" stroke-width="0" >CIII</text>
<rect x="643.5" y="450.3" width="18.5" height="6.4" fill="#ff00ff"/>
<text class="s" x="667.10" y="456.90" font-size="7.80" stroke="#000" stroke-width="0" >MgII</text>
<rect x="698.0" y="450.3" width="18.5" height="6.4" fill="#0000ff"/>
<text class="s" x="721.60" y="456.90" font-size="7.80" stroke="#000" stroke-width="0" >Hβ</text>
<rect x="750.5" y="450.3" width="18.5" height="6.4" fill="#4169e1"/>
<text class="s" x="774.10" y="456.90" font-size="7.80" stroke="#000" stroke-width="0" >Hγ</text>
<rect x="799.0" y="450.3" width="18.5" height="6.4" fill="#ffa500"/>
<text class="s" x="822.60" y="456.90" font-size="7.80" stroke="#000" stroke-width="0" >HeII</text>
<rect x="854.0" y="450.3" width="18.5" height="6.4" fill="#87ceeb"/>
<text class="s" x="877.60" y="456.90" font-size="7.80" stroke="#000" stroke-width="0" >(K)CaII</text>
<rect x="919.5" y="450.3" width="18.5" height="6.4" fill="#87ceeb"/>
<text class="s" x="943.10" y="456.90" font-size="7.80" stroke="#000" stroke-width="0" >(H)CaII</text>
<text class="m" x="70.2" y="498.5" font-size="12.95">HSC-DEX : Possible Matches = 1 (within +/- 3")  P(LAE)/P(OII): <tspan class="s">0.027</tspan></text>
<text class="s" x="602.00" y="493.30" font-size="9.20" stroke="#000" stroke-width="0.15">0.044</text>
<text class="s" x="602.00" y="501.60" font-size="9.20" stroke="#000" stroke-width="0.15">0.015</text>
<text class="m" x="637.00" y="498.50" font-size="12.95" stroke="#000" stroke-width="0.22" >(r)</text>
<clipPath id="cp1"><rect x="70.2" y="533.0" width="147.8" height="147.2"/></clipPath><g clip-path="url(#cp1)">
<rect x="70.2" y="533.0" width="147.8" height="147.2" filter="url(#nbg)"/>
<circle cx="132.6" cy="595.1" r="23.8" fill="#000" opacity="0.5" filter="url(#blur4)"/>
<rect x="117.5" y="579.0" width="31.2" height="32.8" rx="9.9" fill="#000" filter="url(#blur1)"/>
<ellipse cx="163.0" cy="549.1" rx="5.7" ry="8.2" fill="#000" opacity="0.3" filter="url(#blur2)"/>
</g>
<text class="s" x="144.10" y="526.00" font-size="12.90" text-anchor="middle" stroke="#000" stroke-width="0.14" >Fiber Positions</text>
<line x1="78.4" x2="78.4" y1="680.2" y2="684.7" stroke="#222" stroke-width="1"/>
<text class="s" x="78.41" y="695.50" font-size="10.80" text-anchor="middle" stroke="#000" stroke-width="0.14" >−4</text>
<line x1="65.7" x2="70.2" y1="672.3" y2="672.3" stroke="#222" stroke-width="1"/>
<text class="s" x="62.70" y="676.39" font-size="10.80" text-anchor="end" stroke="#000" stroke-width="0.14" >−4</text>
<line x1="111.3" x2="111.3" y1="680.2" y2="684.7" stroke="#222" stroke-width="1"/>
<text class="s" x="111.26" y="695.50" font-size="10.80" text-anchor="middle" stroke="#000" stroke-width="0.14" >−2</text>
<line x1="65.7" x2="70.2" y1="639.4" y2="639.4" stroke="#222" stroke-width="1"/>
<text class="s" x="62.70" y="643.54" font-size="10.80" text-anchor="end" stroke="#000" stroke-width="0.14" >−2</text>
<line x1="144.1" x2="144.1" y1="680.2" y2="684.7" stroke="#222" stroke-width="1"/>
<text class="s" x="144.10" y="695.50" font-size="10.80" text-anchor="middle" stroke="#000" stroke-width="0.14" >0</text>
<line x1="65.7" x2="70.2" y1="606.6" y2="606.6" stroke="#222" stroke-width="1"/>
<text class="s" x="62.70" y="610.70" font-size="10.80" text-anchor="end" stroke="#000" stroke-width="0.14" >0</text>
<line x1="176.9" x2="176.9" y1="680.2" y2="684.7" stroke="#222" stroke-width="1"/>
<text class="s" x="176.94" y="695.50" font-size="10.80" text-anchor="middle" stroke="#000" stroke-width="0.14" >2</text>
<line x1="65.7" x2="70.2" y1="573.8" y2="573.8" stroke="#222" stroke-width="1"/>
<text class="s" x="62.70" y="577.86" font-size="10.80" text-anchor="end" stroke="#000" stroke-width="0.14" >2</text>
<line x1="209.8" x2="209.8" y1="680.2" y2="684.7" stroke="#222" stroke-width="1"/>
<text class="s" x="209.79" y="695.50" font-size="10.80" text-anchor="middle" stroke="#000" stroke-width="0.14" >4</text>
<line x1="65.7" x2="70.2" y1="540.9" y2="540.9" stroke="#222" stroke-width="1"/>
<text class="s" x="62.70" y="545.01" font-size="10.80" text-anchor="end" stroke="#000" stroke-width="0.14" >4</text>
<text class="s" x="144.10" y="707.00" font-size="10.80" text-anchor="middle" stroke="#000" stroke-width="0.14" >arcsecs</text>
<rect x="70.2" y="533.0" width="147.8" height="147.2" fill="none" stroke="#000" stroke-width="1.2"/>
<circle cx="131.3" cy="560.0" r="12.2" fill="none" stroke="#555" stroke-width="1.15" opacity="0.9"/>
<circle cx="155.3" cy="560.0" r="12.2" fill="none" stroke="#555" stroke-width="1.15" opacity="0.9"/>
<circle cx="96.3" cy="582.5" r="12.2" fill="none" stroke="#555" stroke-width="1.15" opacity="0.9"/>
<circle cx="120.6" cy="582.5" r="12.2" fill="none" stroke="#555" stroke-width="1.15" opacity="0.9"/>
<circle cx="168.2" cy="579.2" r="12.2" fill="none" stroke="#555" stroke-width="1.15" opacity="0.9"/>
<circle cx="192.4" cy="578.4" r="12.2" fill="none" stroke="#555" stroke-width="1.15" opacity="0.9"/>
<circle cx="110.1" cy="603.0" r="12.2" fill="none" stroke="#555" stroke-width="1.15" opacity="0.9"/>
<circle cx="182.0" cy="599.2" r="12.2" fill="none" stroke="#555" stroke-width="1.15" opacity="0.9"/>
<circle cx="98.3" cy="624.0" r="12.2" fill="none" stroke="#555" stroke-width="1.15" opacity="0.9"/>
<circle cx="122.6" cy="623.5" r="12.2" fill="none" stroke="#555" stroke-width="1.15" opacity="0.9"/>
<circle cx="170.4" cy="621.1" r="12.2" fill="none" stroke="#555" stroke-width="1.15" opacity="0.9"/>
<circle cx="195.0" cy="619.9" r="12.2" fill="none" stroke="#555" stroke-width="1.15" opacity="0.9"/>
<circle cx="112.2" cy="643.9" r="12.2" fill="none" stroke="#555" stroke-width="1.15" opacity="0.9"/>
<circle cx="136.1" cy="643.6" r="12.2" fill="none" stroke="#555" stroke-width="1.15" opacity="0.9"/>
<circle cx="160.2" cy="642.4" r="12.2" fill="none" stroke="#555" stroke-width="1.15" opacity="0.9"/>
<circle cx="184.0" cy="640.6" r="12.2" fill="none" stroke="#555" stroke-width="1.15" opacity="0.9"/>
<circle cx="149.0" cy="663.4" r="12.2" fill="none" stroke="#555" stroke-width="1.15" opacity="0.9"/>
<rect x="94.8" y="557.3" width="98.5" height="98.5" fill="none" stroke="#ff0000" stroke-width="1.7"/>
<circle cx="144.9" cy="580.5" r="12.2" fill="none" stroke="#ff0000" stroke-width="1.5"/>
<circle cx="133.4" cy="601.7" r="12.2" fill="none" stroke="#0000ff" stroke-width="1.5"/>
<circle cx="158.1" cy="601.2" r="12.2" fill="none" stroke="#00ff00" stroke-width="1.5"/>
<circle cx="146.9" cy="621.9" r="12.2" fill="none" stroke="#ffa500" stroke-width="1.5"/>
<path d="M141.6,606.6 h5 M144.1,604.1 v5" stroke="#ff0000" stroke-width="1"/>
<text class="s" x="144.10" y="546.37" font-size="10.80" fill="#ff0000" text-anchor="middle" stroke="#ff0000" stroke-width="0.14" >N</text>
<text class="s" x="80.05" y="609.80" font-size="10.80" fill="#ff0000" text-anchor="middle" stroke="#ff0000" stroke-width="0.14" >E</text>
<clipPath id="cp2"><rect x="255.3" y="533.0" width="148.7" height="147.2"/></clipPath><g clip-path="url(#cp2)">
<rect x="255.3" y="533.0" width="148.7" height="147.2" fill="#39568c"/>
<ellipse cx="268.5" cy="555.4" rx="24.8" ry="23.1" fill="#443a83" opacity="1.00" filter="url(#blur4)"/>
<ellipse cx="283.4" cy="580.2" rx="11.6" ry="16.5" fill="#414487" opacity="0.90" filter="url(#blur4)"/>
<ellipse cx="384.2" cy="591.7" rx="31.4" ry="14.9" fill="#453581" opacity="1.00" filter="url(#blur4)"/>
<ellipse cx="366.0" cy="552.1" rx="16.5" ry="13.2" fill="#443a83" opacity="0.85" filter="url(#blur4)"/>
<ellipse cx="361.0" cy="657.8" rx="18.2" ry="13.2" fill="#443a83" opacity="0.85" filter="url(#blur4)"/>
<ellipse cx="260.3" cy="671.0" rx="14.9" ry="14.9" fill="#414487" opacity="0.90" filter="url(#blur4)"/>
<ellipse cx="400.7" cy="548.8" rx="9.9" ry="14.9" fill="#46327e" opacity="0.90" filter="url(#blur3)"/>
<ellipse cx="403.2" cy="632.4" rx="8.3" ry="13.2" fill="#46327e" opacity="0.90" filter="url(#blur3)"/>
<ellipse cx="286.7" cy="616.5" rx="9.9" ry="13.2" fill="#3e4989" opacity="0.80" filter="url(#blur4)"/>
<ellipse cx="304.9" cy="538.9" rx="23.1" ry="11.6" fill="#25858e" opacity="0.90" filter="url(#blur4)"/>
<ellipse cx="302.9" cy="536.4" rx="6.9" ry="5.3" fill="#6ece58" opacity="1.00" filter="url(#blur2)"/>
<ellipse cx="345.8" cy="636.3" rx="23.1" ry="18.2" fill="#24878e" opacity="0.90" filter="url(#blur4)"/>
<ellipse cx="345.8" cy="636.3" rx="7.9" ry="6.9" fill="#4ac16d" opacity="1.00" filter="url(#blur2)"/>
<ellipse cx="258.6" cy="583.5" rx="11.6" ry="21.5" fill="#21918c" opacity="0.90" filter="url(#blur4)"/>
<ellipse cx="257.0" cy="581.8" rx="5.0" ry="6.6" fill="#35b779" opacity="0.90" filter="url(#blur2)"/>
<ellipse cx="273.5" cy="641.3" rx="16.5" ry="23.1" fill="#24878e" opacity="0.90" filter="url(#blur4)"/>
<ellipse cx="275.1" cy="642.5" rx="5.0" ry="5.0" fill="#35b779" opacity="0.90" filter="url(#blur2)"/>
<ellipse cx="344.5" cy="565.3" rx="13.2" ry="13.2" fill="#26828e" opacity="0.80" filter="url(#blur4)"/>
<ellipse cx="313.1" cy="631.4" rx="24.8" ry="8.3" fill="#2c728e" opacity="0.70" filter="url(#blur4)"/>
<ellipse cx="374.3" cy="626.4" rx="13.2" ry="13.2" fill="#2e6e8e" opacity="0.60" filter="url(#blur4)"/>
<ellipse cx="351.1" cy="535.6" rx="13.2" ry="6.6" fill="#2c728e" opacity="0.70" filter="url(#blur4)"/>
<ellipse cx="384.2" cy="669.4" rx="16.5" ry="9.9" fill="#33638d" opacity="0.70" filter="url(#blur4)"/>
<ellipse cx="366.0" cy="549.9" rx="5.0" ry="4.1" fill="#440154" opacity="0.90" filter="url(#blur2)"/>
<ellipse cx="397.4" cy="593.1" rx="9.9" ry="4.6" fill="#440154" opacity="0.90" filter="url(#blur2)"/>
<ellipse cx="359.4" cy="659.5" rx="5.8" ry="5.0" fill="#440154" opacity="0.90" filter="url(#blur2)"/>
<g filter="url(#blur3)"><polygon points="301.6,644.6 318.1,644.6 336.3,662.8 333.0,685.9 296.6,685.9 291.6,662.8" fill="#440154"/></g>
<polygon points="304.9,649.6 317.3,649.6 331.3,663.6 329.6,682.6 299.9,682.6 296.6,663.6" fill="#440154" filter="url(#blur1)"/>
<g filter="url(#blur4)"><polygon points="293.3,599.2 304.9,573.6 334.6,565.3 347.8,566.9 350.3,596.7 324.7,623.1 309.8,621.5" fill="#1f9e89"/></g>
<g filter="url(#blur2)"><polygon points="297.4,599.2 306.5,575.2 335.4,573.6 344.5,595.9 324.7,618.5 311.5,617.3" fill="#5ec962"/></g>
<polygon points="300.7,598.7 307.5,578.8 333.6,577.2 341.2,595.4 323.9,614.4 312.5,613.5" fill="#fde725" filter="url(#blur1)"/>
</g>
<text class="s" x="329.65" y="526.00" font-size="12.90" text-anchor="middle" stroke="#000" stroke-width="0.14" >Lineflux Map</text>
<line x1="263.6" x2="263.6" y1="680.2" y2="684.7" stroke="#222" stroke-width="1"/>
<text class="s" x="263.56" y="695.50" font-size="10.80" text-anchor="middle" stroke="#000" stroke-width="0.14" >−4</text>
<line x1="250.8" x2="255.3" y1="672.7" y2="672.7" stroke="#222" stroke-width="1"/>
<text class="s" x="247.80" y="676.79" font-size="10.80" text-anchor="end" stroke="#000" stroke-width="0.14" >−4</text>
<line x1="296.6" x2="296.6" y1="680.2" y2="684.7" stroke="#222" stroke-width="1"/>
<text class="s" x="296.61" y="695.50" font-size="10.80" text-anchor="middle" stroke="#000" stroke-width="0.14" >−2</text>
<line x1="250.8" x2="255.3" y1="639.6" y2="639.6" stroke="#222" stroke-width="1"/>
<text class="s" x="247.80" y="643.74" font-size="10.80" text-anchor="end" stroke="#000" stroke-width="0.14" >−2</text>
<line x1="329.6" x2="329.6" y1="680.2" y2="684.7" stroke="#222" stroke-width="1"/>
<text class="s" x="329.65" y="695.50" font-size="10.80" text-anchor="middle" stroke="#000" stroke-width="0.14" >0</text>
<line x1="250.8" x2="255.3" y1="606.6" y2="606.6" stroke="#222" stroke-width="1"/>
<text class="s" x="247.80" y="610.70" font-size="10.80" text-anchor="end" stroke="#000" stroke-width="0.14" >0</text>
<line x1="362.7" x2="362.7" y1="680.2" y2="684.7" stroke="#222" stroke-width="1"/>
<text class="s" x="362.69" y="695.50" font-size="10.80" text-anchor="middle" stroke="#000" stroke-width="0.14" >2</text>
<line x1="250.8" x2="255.3" y1="573.6" y2="573.6" stroke="#222" stroke-width="1"/>
<text class="s" x="247.80" y="577.66" font-size="10.80" text-anchor="end" stroke="#000" stroke-width="0.14" >2</text>
<line x1="395.7" x2="395.7" y1="680.2" y2="684.7" stroke="#222" stroke-width="1"/>
<text class="s" x="395.74" y="695.50" font-size="10.80" text-anchor="middle" stroke="#000" stroke-width="0.14" >4</text>
<line x1="250.8" x2="255.3" y1="540.5" y2="540.5" stroke="#222" stroke-width="1"/>
<text class="s" x="247.80" y="544.61" font-size="10.80" text-anchor="end" stroke="#000" stroke-width="0.14" >4</text>
<text class="s" x="329.65" y="707.00" font-size="10.80" text-anchor="middle" stroke="#000" stroke-width="0.14" >s/b: 3.56 +/- 0.109</text>
<rect x="280.1" y="557.0" width="99.1" height="99.1" fill="none" stroke="#ff0000" stroke-width="1.7"/>
<path d="M329.6,569.4 V599.2 M329.6,614.0 V643.8 M292.5,606.6 H322.2 M337.1,606.6 H366.8" stroke="#ff0000" stroke-width="1.4"/>
<text class="s" x="329.65" y="545.99" font-size="10.80" fill="#ff0000" text-anchor="middle" stroke="#ff0000" stroke-width="0.14" >N</text>
<text class="s" x="265.21" y="609.80" font-size="10.80" fill="#ff0000" text-anchor="middle" stroke="#ff0000" stroke-width="0.14" >E</text>
<clipPath id="cp3"><rect x="440.5" y="532.7" width="148.5" height="147.6"/></clipPath><g clip-path="url(#cp3)">
<rect x="440.5" y="532.7" width="148.5" height="147.6" filter="url(#nbg2)"/>
<circle cx="503.2" cy="595.0" r="22.3" fill="#000" opacity="0.4" filter="url(#blur3)"/>
<circle cx="503.2" cy="594.6" r="17.8" fill="#000" filter="url(#blur1)"/>
<ellipse cx="532.9" cy="548.8" rx="5.8" ry="8.2" fill="#000" opacity="0.4" filter="url(#blur2)"/>
</g>
<text class="s" x="514.75" y="525.70" font-size="12.90" text-anchor="middle" stroke="#000" stroke-width="0.14" >HSC(26.2) r</text>
<line x1="448.8" x2="448.8" y1="680.3" y2="684.8" stroke="#222" stroke-width="1"/>
<text class="s" x="448.75" y="695.60" font-size="10.80" text-anchor="middle" stroke="#000" stroke-width="0.14" >−4</text>
<line x1="436.0" x2="440.5" y1="672.5" y2="672.5" stroke="#222" stroke-width="1"/>
<text class="s" x="433.00" y="676.60" font-size="10.80" text-anchor="end" stroke="#000" stroke-width="0.14" >−4</text>
<line x1="481.8" x2="481.8" y1="680.3" y2="684.8" stroke="#222" stroke-width="1"/>
<text class="s" x="481.75" y="695.60" font-size="10.80" text-anchor="middle" stroke="#000" stroke-width="0.14" >−2</text>
<line x1="436.0" x2="440.5" y1="639.5" y2="639.5" stroke="#222" stroke-width="1"/>
<text class="s" x="433.00" y="643.60" font-size="10.80" text-anchor="end" stroke="#000" stroke-width="0.14" >−2</text>
<line x1="514.8" x2="514.8" y1="680.3" y2="684.8" stroke="#222" stroke-width="1"/>
<text class="s" x="514.75" y="695.60" font-size="10.80" text-anchor="middle" stroke="#000" stroke-width="0.14" >0</text>
<line x1="436.0" x2="440.5" y1="606.5" y2="606.5" stroke="#222" stroke-width="1"/>
<text class="s" x="433.00" y="610.60" font-size="10.80" text-anchor="end" stroke="#000" stroke-width="0.14" >0</text>
<line x1="547.8" x2="547.8" y1="680.3" y2="684.8" stroke="#222" stroke-width="1"/>
<text class="s" x="547.75" y="695.60" font-size="10.80" text-anchor="middle" stroke="#000" stroke-width="0.14" >2</text>
<line x1="436.0" x2="440.5" y1="573.5" y2="573.5" stroke="#222" stroke-width="1"/>
<text class="s" x="433.00" y="577.60" font-size="10.80" text-anchor="end" stroke="#000" stroke-width="0.14" >2</text>
<line x1="580.8" x2="580.8" y1="680.3" y2="684.8" stroke="#222" stroke-width="1"/>
<text class="s" x="580.75" y="695.60" font-size="10.80" text-anchor="middle" stroke="#000" stroke-width="0.14" >4</text>
<line x1="436.0" x2="440.5" y1="540.5" y2="540.5" stroke="#222" stroke-width="1"/>
<text class="s" x="433.00" y="544.60" font-size="10.80" text-anchor="end" stroke="#000" stroke-width="0.14" >4</text>
<text class="s" x="514.75" y="707.10" font-size="10.80" text-anchor="middle" stroke="#000" stroke-width="0.14" >m:19.2  re:1.2"  s:1.0"</text>
<text class="s" x="514.75" y="719.30" font-size="10.80" text-anchor="middle" stroke="#000" stroke-width="0.14" >EWr: 0, PLAE: 0.027</text>
<rect x="440.5" y="532.7" width="148.5" height="147.6" fill="none" stroke="#000" stroke-width="1.2"/>
<rect x="465.2" y="557.0" width="99.0" height="99.0" fill="none" stroke="#ff0000" stroke-width="1.4"/>
<path d="M514.8,569.4 V599.1 M514.8,613.9 V643.6 M477.6,606.5 H507.3 M522.2,606.5 H551.9" stroke="#ff0000" stroke-width="1.3"/>
<circle cx="504.0" cy="594.1" r="19.8" fill="none" stroke="#ffd000" stroke-width="1.4"/>
<rect x="496.3" y="588.8" width="13.5" height="13.5" fill="none" stroke="#0000ff" stroke-width="1.4"/>
<text class="s" x="514.75" y="545.98" font-size="10.80" fill="#ff0000" text-anchor="middle" stroke="#ff0000" stroke-width="0.14" >N</text>
<text class="s" x="450.40" y="609.70" font-size="10.80" fill="#ff0000" text-anchor="middle" stroke="#ff0000" stroke-width="0.14" >E</text>
<text class="m" x="70.20" y="786.00" font-size="12.95" stroke="#000" stroke-width="0.22" >Separation</text>
<text class="m" x="70.20" y="800.65" font-size="12.95" stroke="#000" stroke-width="0.22" >Match score</text>
<text class="m" x="70.20" y="815.30" font-size="12.95" stroke="#000" stroke-width="0.22" >RA, Dec</text>
<text class="m" x="70.20" y="829.95" font-size="12.95" stroke="#000" stroke-width="0.22" >Spec z</text>
<text class="m" x="70.20" y="844.60" font-size="12.95" stroke="#000" stroke-width="0.22" >Photo z</text>
<text class="m" x="70.20" y="859.25" font-size="12.95" stroke="#000" stroke-width="0.22" >Est LyA rest-EW</text>
<text class="m" x="70.20" y="873.90" font-size="12.95" stroke="#000" stroke-width="0.22" >mag</text>
<text class="m" x="70.20" y="888.55" font-size="12.95" stroke="#000" stroke-width="0.22" >P(LAE)/P(OII)</text>
<text class="m" x="286.50" y="779.50" font-size="12.95" fill="#0000ff" stroke="#0000ff" stroke-width="0.22" >0.990625"</text>
<text class="m" x="286.50" y="794.00" font-size="12.95" fill="#0000ff" stroke="#0000ff" stroke-width="0.22" >1.000</text>
<text class="m" x="286.50" y="808.50" font-size="12.95" fill="#0000ff" stroke="#0000ff" stroke-width="0.22" >194.760417, 56.335031</text>
<text class="m" x="286.50" y="823.00" font-size="12.95" fill="#0000ff" stroke="#0000ff" stroke-width="0.22" >N/A</text>
<text class="m" x="286.50" y="837.70" font-size="12.95" fill="#0000ff" stroke="#0000ff" stroke-width="0.22" >N/A</text>
<text class="m" x="286.5" y="855" font-size="12.95" fill="#0000ff">0.48(<tspan class="s">±</tspan>0.14)<tspan class="i">Å</tspan></text>
<text class="m" x="286.50" y="870.50" font-size="12.95" fill="#0000ff" stroke="#0000ff" stroke-width="0.22" >19.23(19.23,19.23)R</text>
<text class="s" x="286.5" y="886.5" font-size="12.95" fill="#0000ff" stroke="#0000ff" stroke-width="0.15">0.026</text>
<text class="s" x="328.50" y="881.30" font-size="9.00" fill="#0000ff" stroke="#0000ff" stroke-width="0.15">0.052</text>
<text class="s" x="328.50" y="889.60" font-size="9.00" fill="#0000ff" stroke="#0000ff" stroke-width="0.15">0.015</text>
<text class="m" x="938.50" y="821.50" font-size="12.95" stroke="#000" stroke-width="0.22" >Phot z plot not available.</text>
</svg></body></html>
